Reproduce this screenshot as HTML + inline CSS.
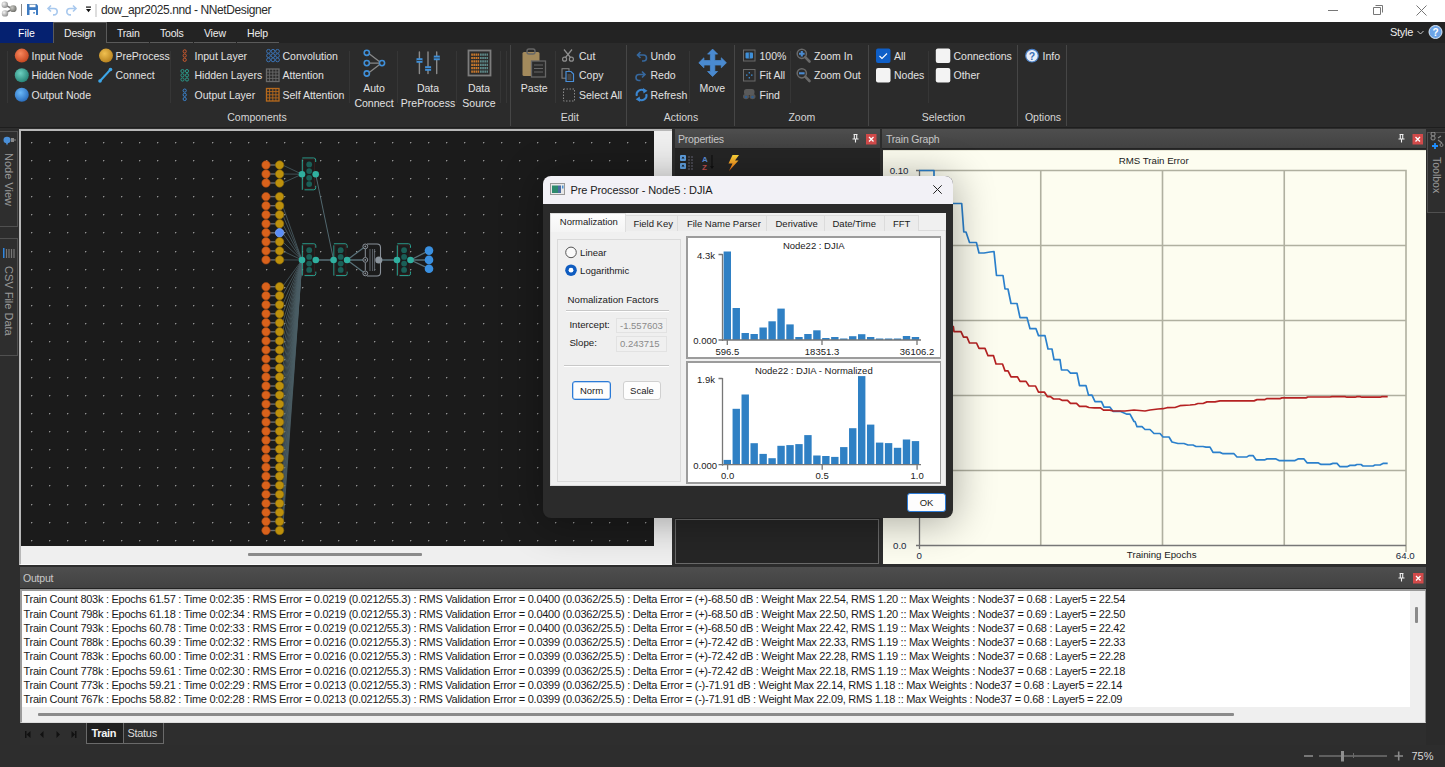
<!DOCTYPE html>
<html><head><meta charset="utf-8">
<style>
*{box-sizing:border-box;margin:0;padding:0}
html,body{width:1445px;height:767px;overflow:hidden;background:#2d2d2d;font-family:"Liberation Sans",sans-serif;}
.a{position:absolute}
.t{position:absolute;white-space:nowrap;line-height:1}
#title{left:0;top:0;width:1445px;height:22px;background:#fff}
#menubar{left:0;top:22px;width:1445px;height:21px;background:#232323}
#ribbon{left:0;top:43px;width:1445px;height:85px;background:#2b2b2b;border-bottom:1px solid #1e1e1e}
.rt{color:#e6e6e6;font-size:11px;letter-spacing:-0.2px}
.sep{position:absolute;width:1px;background:#3c3c3c}
.gsep{position:absolute;width:1px;background:#484848;top:45px;height:81px}
.hdr{position:absolute;height:20px;background:linear-gradient(#4e4e4e,#424242);border-bottom:1px solid #232323}
.hdr .t{color:#d8d8d8;font-size:12px;top:5px;left:5px}
.xbtn{position:absolute;width:11px;height:11px;background:#d24a4a;color:#fff;font-size:9px;line-height:10px;text-align:center;font-weight:bold}
</style></head><body>

<!-- TITLE BAR -->
<div id="title" class="a">
 <svg class="a" style="left:0;top:0" width="100" height="22" viewBox="0 0 100 22">
  <defs><radialGradient id="gb" cx="0.35" cy="0.35" r="0.7"><stop offset="0" stop-color="#f4f4f4"/><stop offset="1" stop-color="#8d8d8d"/></radialGradient>
  <radialGradient id="gb2" cx="0.35" cy="0.35" r="0.7"><stop offset="0" stop-color="#c9c9c4"/><stop offset="1" stop-color="#6e6e69"/></radialGradient></defs>
  <path d="M5 5 L13 9 L5 13" stroke="#777" stroke-width="1.5" fill="none"/>
  <circle cx="4.8" cy="4.8" r="3.2" fill="url(#gb)"/>
  <circle cx="5" cy="13.4" r="3.2" fill="url(#gb)"/>
  <circle cx="13.2" cy="8.7" r="3.4" fill="url(#gb2)"/>
  <rect x="21" y="4" width="1" height="12" fill="#888"/>
  <path d="M27 4h9.5l1.5 1.5v9.5h-11z" fill="#3d7bc2"/><rect x="29.5" y="4.6" width="6" height="2.6" fill="#fff"/><rect x="29.5" y="4" width="6" height="0.8" fill="#9ab"/><rect x="29.5" y="10" width="6.5" height="5" fill="#fff"/><rect x="33.3" y="12" width="1.5" height="1.6" fill="#3d7bc2"/>
  <path d="M51 5.5 L48 8.5 L51 11.5 M48.5 8.5 H54 a3.2 3.2 0 0 1 0 6.4 H53" stroke="#a9c9ee" stroke-width="1.6" fill="none"/>
  <path d="M73 5.5 L76 8.5 L73 11.5 M75.5 8.5 H70 a3.2 3.2 0 0 0 0 6.4 H71" stroke="#a9c9ee" stroke-width="1.6" fill="none"/>
  <rect x="86" y="6.5" width="5" height="1.2" fill="#111"/><path d="M86 9 h5 l-2.5 3.2z" fill="#111"/>
  <rect x="95.5" y="4" width="1" height="13" fill="#bbb"/>
 </svg>
 <span class="t" style="left:101px;top:4px;font-size:12px;color:#2a2a2a;letter-spacing:-0.4px">dow_apr2025.nnd - NNetDesigner</span>
 <svg class="a" style="left:1320px;top:0" width="125" height="22">
  <rect x="1328" y="10" width="10" height="1" fill="#777" transform="translate(-1320,0)"/>
  <path d="M1373.5 7.5 h7 v7 h-7z M1375.5 5.5 h7 v7" stroke="#777" stroke-width="1" fill="none" transform="translate(-1320,0)"/>
  <path d="M1416.5 5.5 l10 10 M1426.5 5.5 l-10 10" stroke="#777" stroke-width="1" fill="none" transform="translate(-1320,0)"/>
 </svg>
</div>
<!-- MENU BAR -->
<div id="menubar" class="a">
 <div class="a" style="left:0;top:0;width:53px;height:21px;background:#052170"></div>
 <span class="t" style="left:18px;top:6px;font-size:10.5px;color:#fff">File</span>
 <div class="a" style="left:53px;top:0;width:54px;height:21px;background:#2b2b2b;border:1px solid #5a5a5a;border-bottom:none"></div>
 <span class="t" style="left:64px;top:6px;font-size:10.5px;color:#eee;letter-spacing:-0.2px">Design</span>
 <div class="a" style="left:107px;top:20px;width:42px;height:1px;background:#5a5a5a"></div>
 <div class="a" style="left:150px;top:20px;width:43px;height:1px;background:#5a5a5a"></div>
 <div class="a" style="left:194px;top:20px;width:42px;height:1px;background:#5a5a5a"></div>
 <div class="a" style="left:237px;top:20px;width:42px;height:1px;background:#5a5a5a"></div>
 <span class="t" style="left:117px;top:6px;font-size:10.5px;color:#eee;letter-spacing:-0.2px">Train</span>
 <span class="t" style="left:160px;top:6px;font-size:10.5px;color:#eee;letter-spacing:-0.2px">Tools</span>
 <span class="t" style="left:204px;top:6px;font-size:10.5px;color:#eee;letter-spacing:-0.2px">View</span>
 <span class="t" style="left:247px;top:6px;font-size:10.5px;color:#eee;letter-spacing:-0.2px">Help</span>
 <span class="t" style="left:1390px;top:5px;font-size:11px;color:#eee;letter-spacing:-0.3px">Style</span>
 <svg class="a" style="left:1415px;top:0" width="30" height="21">
  <path d="M2.5 9 l3 3 l3 -3" stroke="#ccc" stroke-width="1" fill="none"/>
  <circle cx="20.5" cy="10" r="6.5" fill="#6da4e6" stroke="#dbe9f8" stroke-width="1"/>
  <text x="20.5" y="14" font-size="10" font-weight="bold" fill="#fff" text-anchor="middle" font-family="Liberation Sans">?</text>
 </svg>
</div>

<!-- RIBBON -->
<div id="ribbon" class="a"></div>
<div class="a" style="left:510px;top:45px;width:1px;height:81px;background:#464646"></div>
<div class="a" style="left:626px;top:45px;width:1px;height:81px;background:#464646"></div>
<div class="a" style="left:734px;top:45px;width:1px;height:81px;background:#464646"></div>
<div class="a" style="left:868px;top:45px;width:1px;height:81px;background:#464646"></div>
<div class="a" style="left:1017px;top:45px;width:1px;height:81px;background:#464646"></div>
<div class="a" style="left:1066px;top:45px;width:1px;height:81px;background:#464646"></div>
<div class="a" style="left:7px;top:51px;width:1px;height:52px;background:#363636"></div>
<div class="a" style="left:170px;top:51px;width:1px;height:52px;background:#363636"></div>
<div class="a" style="left:349px;top:51px;width:1px;height:52px;background:#363636"></div>
<div class="a" style="left:397px;top:51px;width:1px;height:52px;background:#363636"></div>
<div class="a" style="left:456px;top:51px;width:1px;height:52px;background:#363636"></div>
<div class="a" style="left:500px;top:51px;width:1px;height:52px;background:#363636"></div>
<div class="a" style="left:506px;top:51px;width:1px;height:52px;background:#363636"></div>
<div class="a" style="left:555px;top:51px;width:1px;height:52px;background:#363636"></div>
<div class="a" style="left:689px;top:51px;width:1px;height:52px;background:#363636"></div>
<div class="a" style="left:790px;top:51px;width:1px;height:52px;background:#363636"></div>
<div class="a" style="left:928px;top:51px;width:1px;height:52px;background:#363636"></div>
<span class="t" style="left:31.5px;top:50.9px;font-size:10.5px;color:#e2e2e2;letter-spacing:0px;">Input Node</span>
<span class="t" style="left:31.5px;top:70.1px;font-size:10.5px;color:#e2e2e2;letter-spacing:0px;">Hidden Node</span>
<span class="t" style="left:31.5px;top:89.7px;font-size:10.5px;color:#e2e2e2;letter-spacing:0px;">Output Node</span>
<span class="t" style="left:115.5px;top:50.9px;font-size:10.5px;color:#e2e2e2;letter-spacing:0px;">PreProcess</span>
<span class="t" style="left:115.5px;top:70.1px;font-size:10.5px;color:#e2e2e2;letter-spacing:0px;">Connect</span>
<span class="t" style="left:194.5px;top:50.9px;font-size:10.5px;color:#e2e2e2;letter-spacing:0px;">Input Layer</span>
<span class="t" style="left:194.5px;top:70.1px;font-size:10.5px;color:#e2e2e2;letter-spacing:0px;">Hidden Layers</span>
<span class="t" style="left:194.5px;top:89.7px;font-size:10.5px;color:#e2e2e2;letter-spacing:0px;">Output Layer</span>
<span class="t" style="left:282.5px;top:50.9px;font-size:10.5px;color:#e2e2e2;letter-spacing:0px;">Convolution</span>
<span class="t" style="left:282.5px;top:70.1px;font-size:10.5px;color:#e2e2e2;letter-spacing:0px;">Attention</span>
<span class="t" style="left:282.5px;top:89.7px;font-size:10.5px;color:#e2e2e2;letter-spacing:0px;">Self Attention</span>
<span class="t" style="left:224.0px;width:300px;text-align:center;top:83.4px;font-size:10.5px;color:#e2e2e2;letter-spacing:0px;">Auto</span>
<span class="t" style="left:224.0px;width:300px;text-align:center;top:97.5px;font-size:10.5px;color:#e2e2e2;letter-spacing:0px;">Connect</span>
<span class="t" style="left:278.0px;width:300px;text-align:center;top:83.4px;font-size:10.5px;color:#e2e2e2;letter-spacing:0px;">Data</span>
<span class="t" style="left:278.0px;width:300px;text-align:center;top:97.5px;font-size:10.5px;color:#e2e2e2;letter-spacing:0px;">PreProcess</span>
<span class="t" style="left:329.0px;width:300px;text-align:center;top:83.4px;font-size:10.5px;color:#e2e2e2;letter-spacing:0px;">Data</span>
<span class="t" style="left:329.0px;width:300px;text-align:center;top:97.5px;font-size:10.5px;color:#e2e2e2;letter-spacing:0px;">Source</span>
<span class="t" style="left:384.3px;width:300px;text-align:center;top:83.4px;font-size:10.5px;color:#e2e2e2;letter-spacing:0px;">Paste</span>
<span class="t" style="left:579.0px;top:50.9px;font-size:10.5px;color:#e2e2e2;letter-spacing:0px;">Cut</span>
<span class="t" style="left:579.0px;top:70.1px;font-size:10.5px;color:#e2e2e2;letter-spacing:0px;">Copy</span>
<span class="t" style="left:579.0px;top:89.7px;font-size:10.5px;color:#e2e2e2;letter-spacing:0px;">Select All</span>
<span class="t" style="left:650.5px;top:50.9px;font-size:10.5px;color:#e2e2e2;letter-spacing:0px;">Undo</span>
<span class="t" style="left:650.5px;top:70.1px;font-size:10.5px;color:#e2e2e2;letter-spacing:0px;">Redo</span>
<span class="t" style="left:650.5px;top:89.7px;font-size:10.5px;color:#e2e2e2;letter-spacing:0px;">Refresh</span>
<span class="t" style="left:562.3px;width:300px;text-align:center;top:83.4px;font-size:10.5px;color:#e2e2e2;letter-spacing:0px;">Move</span>
<span class="t" style="left:759.5px;top:50.9px;font-size:10.5px;color:#e2e2e2;letter-spacing:0px;">100%</span>
<span class="t" style="left:759.5px;top:70.1px;font-size:10.5px;color:#e2e2e2;letter-spacing:0px;">Fit All</span>
<span class="t" style="left:759.5px;top:89.7px;font-size:10.5px;color:#e2e2e2;letter-spacing:0px;">Find</span>
<span class="t" style="left:814.0px;top:50.9px;font-size:10.5px;color:#e2e2e2;letter-spacing:0px;">Zoom In</span>
<span class="t" style="left:814.0px;top:70.1px;font-size:10.5px;color:#e2e2e2;letter-spacing:0px;">Zoom Out</span>
<span class="t" style="left:894.0px;top:50.9px;font-size:10.5px;color:#e2e2e2;letter-spacing:0px;">All</span>
<span class="t" style="left:894.0px;top:70.1px;font-size:10.5px;color:#e2e2e2;letter-spacing:0px;">Nodes</span>
<span class="t" style="left:953.5px;top:50.9px;font-size:10.5px;color:#e2e2e2;letter-spacing:0px;">Connections</span>
<span class="t" style="left:953.5px;top:70.1px;font-size:10.5px;color:#e2e2e2;letter-spacing:0px;">Other</span>
<span class="t" style="left:1042.5px;top:50.9px;font-size:10.5px;color:#e2e2e2;letter-spacing:0px;">Info</span>
<span class="t" style="left:107.0px;width:300px;text-align:center;top:111.7px;font-size:10.5px;color:#d6d6d6;letter-spacing:0px;">Components</span>
<span class="t" style="left:419.8px;width:300px;text-align:center;top:111.7px;font-size:10.5px;color:#d6d6d6;letter-spacing:0px;">Edit</span>
<span class="t" style="left:531.0px;width:300px;text-align:center;top:111.7px;font-size:10.5px;color:#d6d6d6;letter-spacing:0px;">Actions</span>
<span class="t" style="left:651.8px;width:300px;text-align:center;top:111.7px;font-size:10.5px;color:#d6d6d6;letter-spacing:0px;">Zoom</span>
<span class="t" style="left:793.4px;width:300px;text-align:center;top:111.7px;font-size:10.5px;color:#d6d6d6;letter-spacing:0px;">Selection</span>
<span class="t" style="left:893.0px;width:300px;text-align:center;top:111.7px;font-size:10.5px;color:#d6d6d6;letter-spacing:0px;">Options</span>
<svg class="a" style="left:0;top:0" width="1100" height="128" viewBox="0 0 1100 128">
<defs><radialGradient id="gOr" cx="0.4" cy="0.35" r="0.75"><stop offset="0" stop-color="#f8875c"/><stop offset="1" stop-color="#c03e18"/></radialGradient><radialGradient id="gTe" cx="0.4" cy="0.35" r="0.75"><stop offset="0" stop-color="#6dd0c0"/><stop offset="1" stop-color="#1d7a6d"/></radialGradient><radialGradient id="gBl" cx="0.4" cy="0.35" r="0.75"><stop offset="0" stop-color="#6ab8f8"/><stop offset="1" stop-color="#2163b5"/></radialGradient><radialGradient id="gGo" cx="0.4" cy="0.35" r="0.75"><stop offset="0" stop-color="#f0c050"/><stop offset="1" stop-color="#b07a18"/></radialGradient></defs>
<circle cx="21.8" cy="55.6" r="7" fill="url(#gOr)"/><circle cx="21.8" cy="75.3" r="7" fill="url(#gTe)"/><circle cx="21.8" cy="94.8" r="7" fill="url(#gBl)"/><circle cx="106" cy="55.6" r="7" fill="url(#gGo)"/><path d="M100 81 L110.5 69.5" stroke="#3da6e8" stroke-width="2"/><circle cx="100" cy="81" r="1.8" fill="#3da6e8"/><circle cx="110.5" cy="69.5" r="1.8" fill="#3da6e8"/><circle cx="184.7" cy="51.4" r="1.6" fill="none" stroke="#cc5a2e" stroke-width="1"/><circle cx="184.7" cy="55.6" r="1.6" fill="none" stroke="#cc5a2e" stroke-width="1"/><circle cx="184.7" cy="59.8" r="1.6" fill="none" stroke="#cc5a2e" stroke-width="1"/><circle cx="182.5" cy="71.1" r="1.6" fill="none" stroke="#2a9a8a" stroke-width="1"/><circle cx="182.5" cy="75.3" r="1.6" fill="none" stroke="#2a9a8a" stroke-width="1"/><circle cx="182.5" cy="79.5" r="1.6" fill="none" stroke="#2a9a8a" stroke-width="1"/><circle cx="187" cy="71.1" r="1.6" fill="none" stroke="#2a9a8a" stroke-width="1"/><circle cx="187" cy="75.3" r="1.6" fill="none" stroke="#2a9a8a" stroke-width="1"/><circle cx="187" cy="79.5" r="1.6" fill="none" stroke="#2a9a8a" stroke-width="1"/><circle cx="184.7" cy="90.6" r="1.6" fill="none" stroke="#3a82cc" stroke-width="1"/><circle cx="184.7" cy="94.8" r="1.6" fill="none" stroke="#3a82cc" stroke-width="1"/><circle cx="184.7" cy="99.0" r="1.6" fill="none" stroke="#3a82cc" stroke-width="1"/><circle cx="268.5" cy="51.3" r="1.9" fill="none" stroke="#3a72b4" stroke-width="1"/><circle cx="268.5" cy="55.6" r="1.9" fill="none" stroke="#3a72b4" stroke-width="1"/><circle cx="268.5" cy="59.9" r="1.9" fill="none" stroke="#3a72b4" stroke-width="1"/><circle cx="273.0" cy="51.3" r="1.9" fill="none" stroke="#3a72b4" stroke-width="1"/><circle cx="273.0" cy="55.6" r="1.9" fill="none" stroke="#3a72b4" stroke-width="1"/><circle cx="273.0" cy="59.9" r="1.9" fill="none" stroke="#3a72b4" stroke-width="1"/><circle cx="277.5" cy="51.3" r="1.9" fill="none" stroke="#3a72b4" stroke-width="1"/><circle cx="277.5" cy="55.6" r="1.9" fill="none" stroke="#3a72b4" stroke-width="1"/><circle cx="277.5" cy="59.9" r="1.9" fill="none" stroke="#3a72b4" stroke-width="1"/><rect x="266.5" y="69" width="12.5" height="12.5" fill="none" stroke="#6a6a6a" stroke-width="1.3"/><path d="M269.6 69 V81.5 M266.5 72.1 H279.0" stroke="#6a6a6a" stroke-width="0.9"/><path d="M272.8 69 V81.5 M266.5 75.2 H279.0" stroke="#6a6a6a" stroke-width="0.9"/><path d="M275.9 69 V81.5 M266.5 78.4 H279.0" stroke="#6a6a6a" stroke-width="0.9"/><rect x="266.5" y="88.5" width="12.5" height="12.5" fill="none" stroke="#b86a1c" stroke-width="1.3"/><path d="M269.6 88.5 V101.0 M266.5 91.6 H279.0" stroke="#b86a1c" stroke-width="0.9"/><path d="M272.8 88.5 V101.0 M266.5 94.8 H279.0" stroke="#b86a1c" stroke-width="0.9"/><path d="M275.9 88.5 V101.0 M266.5 97.9 H279.0" stroke="#b86a1c" stroke-width="0.9"/><g stroke="#3f8fd8" stroke-width="1.6" fill="none"><circle cx="366.8" cy="52.8" r="2.6"/><circle cx="366.8" cy="63.1" r="2.6"/><circle cx="366.8" cy="73.5" r="2.6"/><circle cx="382" cy="63.1" r="2.6"/></g><path d="M369.5 54 L379.3 61.5 M369.5 63.1 H379.3 M369.5 72.3 L379.3 64.7" stroke="#888" stroke-width="1.3"/><path d="M419.4 52 V73.5 M428 52 V73.5 M436.7 52 V73.5" stroke="#8a8a8a" stroke-width="1.4" stroke-linecap="round"/><rect x="416.5" y="58.2" width="6" height="4.6" fill="#3f8fd8"/><rect x="425.1" y="66.2" width="6" height="4.6" fill="#3f8fd8"/><rect x="433.8" y="55.6" width="6" height="4.6" fill="#3f8fd8"/><path d="M416.5 60.5 H422.5 M425.1 68.5 H431.1 M433.8 57.9 H439.8" stroke="#2b2b2b" stroke-width="0.8"/><rect x="468.5" y="50.5" width="22" height="25" fill="#2b2b2b" stroke="#7d7d7d" stroke-width="1.8"/><path d="M471.2 54.6 h8" stroke="#c8782c" stroke-width="2.2" stroke-dasharray="1.7 0.5"/><path d="M480 54.6 h8" stroke="#5d8888" stroke-width="2.2" stroke-dasharray="1.7 0.5"/><path d="M471.2 58.0 h8" stroke="#c8782c" stroke-width="2.2" stroke-dasharray="1.7 0.5"/><path d="M480 58.0 h8" stroke="#5d8888" stroke-width="2.2" stroke-dasharray="1.7 0.5"/><path d="M471.2 61.4 h8" stroke="#c8782c" stroke-width="2.2" stroke-dasharray="1.7 0.5"/><path d="M480 61.4 h8" stroke="#5d8888" stroke-width="2.2" stroke-dasharray="1.7 0.5"/><path d="M471.2 64.8 h8" stroke="#c8782c" stroke-width="2.2" stroke-dasharray="1.7 0.5"/><path d="M480 64.8 h8" stroke="#5d8888" stroke-width="2.2" stroke-dasharray="1.7 0.5"/><path d="M471.2 68.2 h8" stroke="#c8782c" stroke-width="2.2" stroke-dasharray="1.7 0.5"/><path d="M480 68.2 h8" stroke="#5d8888" stroke-width="2.2" stroke-dasharray="1.7 0.5"/><path d="M471.2 71.6 h8" stroke="#c8782c" stroke-width="2.2" stroke-dasharray="1.7 0.5"/><path d="M480 71.6 h8" stroke="#5d8888" stroke-width="2.2" stroke-dasharray="1.7 0.5"/><rect x="522.5" y="52" width="17" height="24" rx="1.5" fill="#a38a5c"/><rect x="527" y="49" width="8" height="5" rx="2" fill="none" stroke="#666" stroke-width="1.4"/><rect x="531.5" y="61" width="14" height="16" fill="#2b2b2b" stroke="#666" stroke-width="1.3"/><path d="M534 65 H543 M534 68.5 H543 M534 72 H543" stroke="#666" stroke-width="1"/><g stroke="#8f8f8f" stroke-width="1.2" fill="none"><circle cx="564.6" cy="59.2" r="2"/><circle cx="571.4" cy="59.2" r="2"/><path d="M565.5 57.5 L572 49.5 M570.5 57.5 L564 49.5"/></g><rect x="562" y="68.7" width="7" height="9.5" fill="none" stroke="#888" stroke-width="1"/><path d="M566 71.5 h5 l2.5 2.5 v7.5 h-7.5z" fill="#2b2b2b" stroke="#4a8fd8" stroke-width="1.2"/><path d="M567.5 75 h4 M567.5 77 h4 M567.5 79 h4" stroke="#777" stroke-width="0.7"/><rect x="563.5" y="89" width="11" height="12" fill="none" stroke="#8a8a8a" stroke-width="1" stroke-dasharray="1.5 1.5"/><path d="M640.5 52 L637.5 55 L640.5 58 M638 55 H643.5 a3 3 0 0 1 0 6 H642" stroke="#36689e" stroke-width="1.6" fill="none"/><path d="M642 71.5 L645 74.5 L642 77.5 M644.5 74.5 H639 a3 3 0 0 0 0 6 H640.5" stroke="#36689e" stroke-width="1.6" fill="none"/><path d="M636.8 96 A4.8 4.8 0 0 1 644.5 91" stroke="#3b86d0" stroke-width="2" fill="none"/><path d="M646.3 94 A4.8 4.8 0 0 1 638.6 99" stroke="#3b86d0" stroke-width="2" fill="none"/><path d="M643 88 L647.5 90.8 L643.5 93.5z M640.2 102 L635.7 99.2 L639.7 96.5z" fill="#3b86d0"/><path d="M712.6 49.1 L717.6 54.1 L714.8 54.1 L714.8 60.6 L721.3 60.6 L721.3 57.8 L726.4 62.8 L721.3 67.8 L721.3 65.0 L714.8 65.0 L714.8 71.5 L717.6 71.5 L712.6 76.5 L707.6 71.5 L710.4 71.5 L710.4 65.0 L703.9 65.0 L703.9 67.8 L698.8 62.8 L703.9 57.8 L703.9 60.6 L710.4 60.6 L710.4 54.1 L707.6 54.1z" fill="#4a8ad0" stroke="#4a8ad0" stroke-width="0.8" stroke-linejoin="round"/><rect x="743.5" y="50" width="11.5" height="11" fill="none" stroke="#6a6a6a" stroke-width="1"/><rect x="745.5" y="52.5" width="7.5" height="6" rx="1" fill="#3f8fd8"/><path d="M749.3 52.5 v6" stroke="#2b2b2b" stroke-width="0.8"/><rect x="743.5" y="69.5" width="11.5" height="11.5" fill="none" stroke="#6a6a6a" stroke-width="1"/><path d="M749.3 72 v1.5 M749.3 77 v1.5 M746 75.2 h1.5 M751 75.2 h1.5" stroke="#3f8fd8" stroke-width="1.2"/><ellipse cx="746" cy="96.5" rx="3" ry="2.8" fill="#555"/><ellipse cx="752.5" cy="96.5" rx="3" ry="2.8" fill="#555"/><rect x="744" y="89" width="10.5" height="6" rx="2.5" fill="#5a5a5a"/><circle cx="746" cy="97" r="1.3" fill="#2f5d8e"/><circle cx="752.5" cy="97" r="1.3" fill="#2f5d8e"/><circle cx="801.8" cy="53.8" r="4.6" fill="none" stroke="#6a6a6a" stroke-width="1.5"/><path d="M805.2 57.2 L809.5 61.5" stroke="#6a6a6a" stroke-width="2.6" stroke-linecap="round"/><path d="M799 53.8 h5.6 M801.8 51 v5.6" stroke="#4a8ad0" stroke-width="2.1"/><circle cx="801.8" cy="73.3" r="4.6" fill="none" stroke="#6a6a6a" stroke-width="1.5"/><path d="M805.2 76.7 L809.5 81" stroke="#6a6a6a" stroke-width="2.6" stroke-linecap="round"/><path d="M799 73.3 h5.6" stroke="#4a8ad0" stroke-width="2.1"/><rect x="876" y="48.5" width="14.5" height="14.5" rx="2" fill="#0f5fc8"/><path d="M879.5 56 l2.5 2.5 l5 -5" stroke="#fff" stroke-width="1.1" fill="none"/><rect x="876" y="68" width="14.5" height="14.5" rx="2" fill="#f3f3f3"/><rect x="935.8" y="48.5" width="14.5" height="14.5" rx="2" fill="#f3f3f3"/><rect x="935.8" y="68" width="14.5" height="14.5" rx="2" fill="#f3f3f3"/><circle cx="1032" cy="55.7" r="6.3" fill="#e9eff8" stroke="#4a80c8" stroke-width="1.2"/><text x="1032" y="59.8" font-size="10.5" font-weight="bold" fill="#3a70b8" text-anchor="middle" font-family="Liberation Sans">?</text></svg>
<!-- LEFT SIDEBAR -->
<div class="a" style="left:0px;top:131px;width:18px;height:96px;background:#2e2e2e;border:1px solid #505050;border-left:none"></div>
<div class="a" style="left:0px;top:238px;width:18px;height:118px;background:#2e2e2e;border:1px solid #505050;border-left:none"></div>
<svg class="a" style="left:0;top:131px" width="18" height="230"><path d="M3.5 9 a3.5 3.2 0 1 1 7 0 a3.5 3.2 0 1 1 -7 0" fill="#4a90d9"/><path d="M6 12 h2 l-1 2.5z" fill="#4a90d9"/><rect x="11" y="7" width="3" height="4" fill="#888"/><path d="M14 9 h2" stroke="#888"/><rect x="3" y="117" width="1.5" height="10" fill="#2f86e0"/><path d="M6.5 118 v9 M9 118 v9 M11.5 118 v9 M14 118 v9" stroke="#777" stroke-width="1.2"/></svg>
<span class="t" style="left:1px;top:153px;font-size:11px;color:#9a9a9a;transform-origin:0 0;transform:translate(12.5px,0) rotate(90deg)">Node View</span>
<span class="t" style="left:1px;top:265.5px;font-size:11px;color:#9a9a9a;transform-origin:0 0;transform:translate(12.5px,0) rotate(90deg)">CSV File Data</span>
<div class="a" style="left:19px;top:129px;width:653px;height:436px;background:#efefef;border-top:2px solid #b8b8b8;border-left:2px solid #b8b8b8;border-bottom:1px solid #fafafa"></div>
<svg class="a" style="left:21px;top:131px" width="633" height="415" viewBox="21 131 633 415">
<rect x="21" y="131" width="633" height="415" fill="#1b1b1b"/>
<path d="M31 142h1v1h-1zM49 142h1v1h-1zM67 142h1v1h-1zM85 142h1v1h-1zM103 142h1v1h-1zM121 142h1v1h-1zM139 142h1v1h-1zM157 142h1v1h-1zM175 142h1v1h-1zM193 142h1v1h-1zM212 142h1v1h-1zM230 142h1v1h-1zM248 142h1v1h-1zM266 142h1v1h-1zM284 142h1v1h-1zM302 142h1v1h-1zM320 142h1v1h-1zM338 142h1v1h-1zM356 142h1v1h-1zM374 142h1v1h-1zM392 142h1v1h-1zM410 142h1v1h-1zM428 142h1v1h-1zM446 142h1v1h-1zM464 142h1v1h-1zM483 142h1v1h-1zM501 142h1v1h-1zM519 142h1v1h-1zM537 142h1v1h-1zM555 142h1v1h-1zM573 142h1v1h-1zM591 142h1v1h-1zM609 142h1v1h-1zM627 142h1v1h-1zM645 142h1v1h-1zM31 160h1v1h-1zM49 160h1v1h-1zM67 160h1v1h-1zM85 160h1v1h-1zM103 160h1v1h-1zM121 160h1v1h-1zM139 160h1v1h-1zM157 160h1v1h-1zM175 160h1v1h-1zM193 160h1v1h-1zM212 160h1v1h-1zM230 160h1v1h-1zM248 160h1v1h-1zM266 160h1v1h-1zM284 160h1v1h-1zM302 160h1v1h-1zM320 160h1v1h-1zM338 160h1v1h-1zM356 160h1v1h-1zM374 160h1v1h-1zM392 160h1v1h-1zM410 160h1v1h-1zM428 160h1v1h-1zM446 160h1v1h-1zM464 160h1v1h-1zM483 160h1v1h-1zM501 160h1v1h-1zM519 160h1v1h-1zM537 160h1v1h-1zM555 160h1v1h-1zM573 160h1v1h-1zM591 160h1v1h-1zM609 160h1v1h-1zM627 160h1v1h-1zM645 160h1v1h-1zM31 178h1v1h-1zM49 178h1v1h-1zM67 178h1v1h-1zM85 178h1v1h-1zM103 178h1v1h-1zM121 178h1v1h-1zM139 178h1v1h-1zM157 178h1v1h-1zM175 178h1v1h-1zM193 178h1v1h-1zM212 178h1v1h-1zM230 178h1v1h-1zM248 178h1v1h-1zM266 178h1v1h-1zM284 178h1v1h-1zM302 178h1v1h-1zM320 178h1v1h-1zM338 178h1v1h-1zM356 178h1v1h-1zM374 178h1v1h-1zM392 178h1v1h-1zM410 178h1v1h-1zM428 178h1v1h-1zM446 178h1v1h-1zM464 178h1v1h-1zM483 178h1v1h-1zM501 178h1v1h-1zM519 178h1v1h-1zM537 178h1v1h-1zM555 178h1v1h-1zM573 178h1v1h-1zM591 178h1v1h-1zM609 178h1v1h-1zM627 178h1v1h-1zM645 178h1v1h-1zM31 196h1v1h-1zM49 196h1v1h-1zM67 196h1v1h-1zM85 196h1v1h-1zM103 196h1v1h-1zM121 196h1v1h-1zM139 196h1v1h-1zM157 196h1v1h-1zM175 196h1v1h-1zM193 196h1v1h-1zM212 196h1v1h-1zM230 196h1v1h-1zM248 196h1v1h-1zM266 196h1v1h-1zM284 196h1v1h-1zM302 196h1v1h-1zM320 196h1v1h-1zM338 196h1v1h-1zM356 196h1v1h-1zM374 196h1v1h-1zM392 196h1v1h-1zM410 196h1v1h-1zM428 196h1v1h-1zM446 196h1v1h-1zM464 196h1v1h-1zM483 196h1v1h-1zM501 196h1v1h-1zM519 196h1v1h-1zM537 196h1v1h-1zM555 196h1v1h-1zM573 196h1v1h-1zM591 196h1v1h-1zM609 196h1v1h-1zM627 196h1v1h-1zM645 196h1v1h-1zM31 214h1v1h-1zM49 214h1v1h-1zM67 214h1v1h-1zM85 214h1v1h-1zM103 214h1v1h-1zM121 214h1v1h-1zM139 214h1v1h-1zM157 214h1v1h-1zM175 214h1v1h-1zM193 214h1v1h-1zM212 214h1v1h-1zM230 214h1v1h-1zM248 214h1v1h-1zM266 214h1v1h-1zM284 214h1v1h-1zM302 214h1v1h-1zM320 214h1v1h-1zM338 214h1v1h-1zM356 214h1v1h-1zM374 214h1v1h-1zM392 214h1v1h-1zM410 214h1v1h-1zM428 214h1v1h-1zM446 214h1v1h-1zM464 214h1v1h-1zM483 214h1v1h-1zM501 214h1v1h-1zM519 214h1v1h-1zM537 214h1v1h-1zM555 214h1v1h-1zM573 214h1v1h-1zM591 214h1v1h-1zM609 214h1v1h-1zM627 214h1v1h-1zM645 214h1v1h-1zM31 232h1v1h-1zM49 232h1v1h-1zM67 232h1v1h-1zM85 232h1v1h-1zM103 232h1v1h-1zM121 232h1v1h-1zM139 232h1v1h-1zM157 232h1v1h-1zM175 232h1v1h-1zM193 232h1v1h-1zM212 232h1v1h-1zM230 232h1v1h-1zM248 232h1v1h-1zM266 232h1v1h-1zM284 232h1v1h-1zM302 232h1v1h-1zM320 232h1v1h-1zM338 232h1v1h-1zM356 232h1v1h-1zM374 232h1v1h-1zM392 232h1v1h-1zM410 232h1v1h-1zM428 232h1v1h-1zM446 232h1v1h-1zM464 232h1v1h-1zM483 232h1v1h-1zM501 232h1v1h-1zM519 232h1v1h-1zM537 232h1v1h-1zM555 232h1v1h-1zM573 232h1v1h-1zM591 232h1v1h-1zM609 232h1v1h-1zM627 232h1v1h-1zM645 232h1v1h-1zM31 251h1v1h-1zM49 251h1v1h-1zM67 251h1v1h-1zM85 251h1v1h-1zM103 251h1v1h-1zM121 251h1v1h-1zM139 251h1v1h-1zM157 251h1v1h-1zM175 251h1v1h-1zM193 251h1v1h-1zM212 251h1v1h-1zM230 251h1v1h-1zM248 251h1v1h-1zM266 251h1v1h-1zM284 251h1v1h-1zM302 251h1v1h-1zM320 251h1v1h-1zM338 251h1v1h-1zM356 251h1v1h-1zM374 251h1v1h-1zM392 251h1v1h-1zM410 251h1v1h-1zM428 251h1v1h-1zM446 251h1v1h-1zM464 251h1v1h-1zM483 251h1v1h-1zM501 251h1v1h-1zM519 251h1v1h-1zM537 251h1v1h-1zM555 251h1v1h-1zM573 251h1v1h-1zM591 251h1v1h-1zM609 251h1v1h-1zM627 251h1v1h-1zM645 251h1v1h-1zM31 269h1v1h-1zM49 269h1v1h-1zM67 269h1v1h-1zM85 269h1v1h-1zM103 269h1v1h-1zM121 269h1v1h-1zM139 269h1v1h-1zM157 269h1v1h-1zM175 269h1v1h-1zM193 269h1v1h-1zM212 269h1v1h-1zM230 269h1v1h-1zM248 269h1v1h-1zM266 269h1v1h-1zM284 269h1v1h-1zM302 269h1v1h-1zM320 269h1v1h-1zM338 269h1v1h-1zM356 269h1v1h-1zM374 269h1v1h-1zM392 269h1v1h-1zM410 269h1v1h-1zM428 269h1v1h-1zM446 269h1v1h-1zM464 269h1v1h-1zM483 269h1v1h-1zM501 269h1v1h-1zM519 269h1v1h-1zM537 269h1v1h-1zM555 269h1v1h-1zM573 269h1v1h-1zM591 269h1v1h-1zM609 269h1v1h-1zM627 269h1v1h-1zM645 269h1v1h-1zM31 287h1v1h-1zM49 287h1v1h-1zM67 287h1v1h-1zM85 287h1v1h-1zM103 287h1v1h-1zM121 287h1v1h-1zM139 287h1v1h-1zM157 287h1v1h-1zM175 287h1v1h-1zM193 287h1v1h-1zM212 287h1v1h-1zM230 287h1v1h-1zM248 287h1v1h-1zM266 287h1v1h-1zM284 287h1v1h-1zM302 287h1v1h-1zM320 287h1v1h-1zM338 287h1v1h-1zM356 287h1v1h-1zM374 287h1v1h-1zM392 287h1v1h-1zM410 287h1v1h-1zM428 287h1v1h-1zM446 287h1v1h-1zM464 287h1v1h-1zM483 287h1v1h-1zM501 287h1v1h-1zM519 287h1v1h-1zM537 287h1v1h-1zM555 287h1v1h-1zM573 287h1v1h-1zM591 287h1v1h-1zM609 287h1v1h-1zM627 287h1v1h-1zM645 287h1v1h-1zM31 305h1v1h-1zM49 305h1v1h-1zM67 305h1v1h-1zM85 305h1v1h-1zM103 305h1v1h-1zM121 305h1v1h-1zM139 305h1v1h-1zM157 305h1v1h-1zM175 305h1v1h-1zM193 305h1v1h-1zM212 305h1v1h-1zM230 305h1v1h-1zM248 305h1v1h-1zM266 305h1v1h-1zM284 305h1v1h-1zM302 305h1v1h-1zM320 305h1v1h-1zM338 305h1v1h-1zM356 305h1v1h-1zM374 305h1v1h-1zM392 305h1v1h-1zM410 305h1v1h-1zM428 305h1v1h-1zM446 305h1v1h-1zM464 305h1v1h-1zM483 305h1v1h-1zM501 305h1v1h-1zM519 305h1v1h-1zM537 305h1v1h-1zM555 305h1v1h-1zM573 305h1v1h-1zM591 305h1v1h-1zM609 305h1v1h-1zM627 305h1v1h-1zM645 305h1v1h-1zM31 323h1v1h-1zM49 323h1v1h-1zM67 323h1v1h-1zM85 323h1v1h-1zM103 323h1v1h-1zM121 323h1v1h-1zM139 323h1v1h-1zM157 323h1v1h-1zM175 323h1v1h-1zM193 323h1v1h-1zM212 323h1v1h-1zM230 323h1v1h-1zM248 323h1v1h-1zM266 323h1v1h-1zM284 323h1v1h-1zM302 323h1v1h-1zM320 323h1v1h-1zM338 323h1v1h-1zM356 323h1v1h-1zM374 323h1v1h-1zM392 323h1v1h-1zM410 323h1v1h-1zM428 323h1v1h-1zM446 323h1v1h-1zM464 323h1v1h-1zM483 323h1v1h-1zM501 323h1v1h-1zM519 323h1v1h-1zM537 323h1v1h-1zM555 323h1v1h-1zM573 323h1v1h-1zM591 323h1v1h-1zM609 323h1v1h-1zM627 323h1v1h-1zM645 323h1v1h-1zM31 341h1v1h-1zM49 341h1v1h-1zM67 341h1v1h-1zM85 341h1v1h-1zM103 341h1v1h-1zM121 341h1v1h-1zM139 341h1v1h-1zM157 341h1v1h-1zM175 341h1v1h-1zM193 341h1v1h-1zM212 341h1v1h-1zM230 341h1v1h-1zM248 341h1v1h-1zM266 341h1v1h-1zM284 341h1v1h-1zM302 341h1v1h-1zM320 341h1v1h-1zM338 341h1v1h-1zM356 341h1v1h-1zM374 341h1v1h-1zM392 341h1v1h-1zM410 341h1v1h-1zM428 341h1v1h-1zM446 341h1v1h-1zM464 341h1v1h-1zM483 341h1v1h-1zM501 341h1v1h-1zM519 341h1v1h-1zM537 341h1v1h-1zM555 341h1v1h-1zM573 341h1v1h-1zM591 341h1v1h-1zM609 341h1v1h-1zM627 341h1v1h-1zM645 341h1v1h-1zM31 359h1v1h-1zM49 359h1v1h-1zM67 359h1v1h-1zM85 359h1v1h-1zM103 359h1v1h-1zM121 359h1v1h-1zM139 359h1v1h-1zM157 359h1v1h-1zM175 359h1v1h-1zM193 359h1v1h-1zM212 359h1v1h-1zM230 359h1v1h-1zM248 359h1v1h-1zM266 359h1v1h-1zM284 359h1v1h-1zM302 359h1v1h-1zM320 359h1v1h-1zM338 359h1v1h-1zM356 359h1v1h-1zM374 359h1v1h-1zM392 359h1v1h-1zM410 359h1v1h-1zM428 359h1v1h-1zM446 359h1v1h-1zM464 359h1v1h-1zM483 359h1v1h-1zM501 359h1v1h-1zM519 359h1v1h-1zM537 359h1v1h-1zM555 359h1v1h-1zM573 359h1v1h-1zM591 359h1v1h-1zM609 359h1v1h-1zM627 359h1v1h-1zM645 359h1v1h-1zM31 377h1v1h-1zM49 377h1v1h-1zM67 377h1v1h-1zM85 377h1v1h-1zM103 377h1v1h-1zM121 377h1v1h-1zM139 377h1v1h-1zM157 377h1v1h-1zM175 377h1v1h-1zM193 377h1v1h-1zM212 377h1v1h-1zM230 377h1v1h-1zM248 377h1v1h-1zM266 377h1v1h-1zM284 377h1v1h-1zM302 377h1v1h-1zM320 377h1v1h-1zM338 377h1v1h-1zM356 377h1v1h-1zM374 377h1v1h-1zM392 377h1v1h-1zM410 377h1v1h-1zM428 377h1v1h-1zM446 377h1v1h-1zM464 377h1v1h-1zM483 377h1v1h-1zM501 377h1v1h-1zM519 377h1v1h-1zM537 377h1v1h-1zM555 377h1v1h-1zM573 377h1v1h-1zM591 377h1v1h-1zM609 377h1v1h-1zM627 377h1v1h-1zM645 377h1v1h-1zM31 395h1v1h-1zM49 395h1v1h-1zM67 395h1v1h-1zM85 395h1v1h-1zM103 395h1v1h-1zM121 395h1v1h-1zM139 395h1v1h-1zM157 395h1v1h-1zM175 395h1v1h-1zM193 395h1v1h-1zM212 395h1v1h-1zM230 395h1v1h-1zM248 395h1v1h-1zM266 395h1v1h-1zM284 395h1v1h-1zM302 395h1v1h-1zM320 395h1v1h-1zM338 395h1v1h-1zM356 395h1v1h-1zM374 395h1v1h-1zM392 395h1v1h-1zM410 395h1v1h-1zM428 395h1v1h-1zM446 395h1v1h-1zM464 395h1v1h-1zM483 395h1v1h-1zM501 395h1v1h-1zM519 395h1v1h-1zM537 395h1v1h-1zM555 395h1v1h-1zM573 395h1v1h-1zM591 395h1v1h-1zM609 395h1v1h-1zM627 395h1v1h-1zM645 395h1v1h-1zM31 413h1v1h-1zM49 413h1v1h-1zM67 413h1v1h-1zM85 413h1v1h-1zM103 413h1v1h-1zM121 413h1v1h-1zM139 413h1v1h-1zM157 413h1v1h-1zM175 413h1v1h-1zM193 413h1v1h-1zM212 413h1v1h-1zM230 413h1v1h-1zM248 413h1v1h-1zM266 413h1v1h-1zM284 413h1v1h-1zM302 413h1v1h-1zM320 413h1v1h-1zM338 413h1v1h-1zM356 413h1v1h-1zM374 413h1v1h-1zM392 413h1v1h-1zM410 413h1v1h-1zM428 413h1v1h-1zM446 413h1v1h-1zM464 413h1v1h-1zM483 413h1v1h-1zM501 413h1v1h-1zM519 413h1v1h-1zM537 413h1v1h-1zM555 413h1v1h-1zM573 413h1v1h-1zM591 413h1v1h-1zM609 413h1v1h-1zM627 413h1v1h-1zM645 413h1v1h-1zM31 431h1v1h-1zM49 431h1v1h-1zM67 431h1v1h-1zM85 431h1v1h-1zM103 431h1v1h-1zM121 431h1v1h-1zM139 431h1v1h-1zM157 431h1v1h-1zM175 431h1v1h-1zM193 431h1v1h-1zM212 431h1v1h-1zM230 431h1v1h-1zM248 431h1v1h-1zM266 431h1v1h-1zM284 431h1v1h-1zM302 431h1v1h-1zM320 431h1v1h-1zM338 431h1v1h-1zM356 431h1v1h-1zM374 431h1v1h-1zM392 431h1v1h-1zM410 431h1v1h-1zM428 431h1v1h-1zM446 431h1v1h-1zM464 431h1v1h-1zM483 431h1v1h-1zM501 431h1v1h-1zM519 431h1v1h-1zM537 431h1v1h-1zM555 431h1v1h-1zM573 431h1v1h-1zM591 431h1v1h-1zM609 431h1v1h-1zM627 431h1v1h-1zM645 431h1v1h-1zM31 449h1v1h-1zM49 449h1v1h-1zM67 449h1v1h-1zM85 449h1v1h-1zM103 449h1v1h-1zM121 449h1v1h-1zM139 449h1v1h-1zM157 449h1v1h-1zM175 449h1v1h-1zM193 449h1v1h-1zM212 449h1v1h-1zM230 449h1v1h-1zM248 449h1v1h-1zM266 449h1v1h-1zM284 449h1v1h-1zM302 449h1v1h-1zM320 449h1v1h-1zM338 449h1v1h-1zM356 449h1v1h-1zM374 449h1v1h-1zM392 449h1v1h-1zM410 449h1v1h-1zM428 449h1v1h-1zM446 449h1v1h-1zM464 449h1v1h-1zM483 449h1v1h-1zM501 449h1v1h-1zM519 449h1v1h-1zM537 449h1v1h-1zM555 449h1v1h-1zM573 449h1v1h-1zM591 449h1v1h-1zM609 449h1v1h-1zM627 449h1v1h-1zM645 449h1v1h-1zM31 467h1v1h-1zM49 467h1v1h-1zM67 467h1v1h-1zM85 467h1v1h-1zM103 467h1v1h-1zM121 467h1v1h-1zM139 467h1v1h-1zM157 467h1v1h-1zM175 467h1v1h-1zM193 467h1v1h-1zM212 467h1v1h-1zM230 467h1v1h-1zM248 467h1v1h-1zM266 467h1v1h-1zM284 467h1v1h-1zM302 467h1v1h-1zM320 467h1v1h-1zM338 467h1v1h-1zM356 467h1v1h-1zM374 467h1v1h-1zM392 467h1v1h-1zM410 467h1v1h-1zM428 467h1v1h-1zM446 467h1v1h-1zM464 467h1v1h-1zM483 467h1v1h-1zM501 467h1v1h-1zM519 467h1v1h-1zM537 467h1v1h-1zM555 467h1v1h-1zM573 467h1v1h-1zM591 467h1v1h-1zM609 467h1v1h-1zM627 467h1v1h-1zM645 467h1v1h-1zM31 485h1v1h-1zM49 485h1v1h-1zM67 485h1v1h-1zM85 485h1v1h-1zM103 485h1v1h-1zM121 485h1v1h-1zM139 485h1v1h-1zM157 485h1v1h-1zM175 485h1v1h-1zM193 485h1v1h-1zM212 485h1v1h-1zM230 485h1v1h-1zM248 485h1v1h-1zM266 485h1v1h-1zM284 485h1v1h-1zM302 485h1v1h-1zM320 485h1v1h-1zM338 485h1v1h-1zM356 485h1v1h-1zM374 485h1v1h-1zM392 485h1v1h-1zM410 485h1v1h-1zM428 485h1v1h-1zM446 485h1v1h-1zM464 485h1v1h-1zM483 485h1v1h-1zM501 485h1v1h-1zM519 485h1v1h-1zM537 485h1v1h-1zM555 485h1v1h-1zM573 485h1v1h-1zM591 485h1v1h-1zM609 485h1v1h-1zM627 485h1v1h-1zM645 485h1v1h-1zM31 504h1v1h-1zM49 504h1v1h-1zM67 504h1v1h-1zM85 504h1v1h-1zM103 504h1v1h-1zM121 504h1v1h-1zM139 504h1v1h-1zM157 504h1v1h-1zM175 504h1v1h-1zM193 504h1v1h-1zM212 504h1v1h-1zM230 504h1v1h-1zM248 504h1v1h-1zM266 504h1v1h-1zM284 504h1v1h-1zM302 504h1v1h-1zM320 504h1v1h-1zM338 504h1v1h-1zM356 504h1v1h-1zM374 504h1v1h-1zM392 504h1v1h-1zM410 504h1v1h-1zM428 504h1v1h-1zM446 504h1v1h-1zM464 504h1v1h-1zM483 504h1v1h-1zM501 504h1v1h-1zM519 504h1v1h-1zM537 504h1v1h-1zM555 504h1v1h-1zM573 504h1v1h-1zM591 504h1v1h-1zM609 504h1v1h-1zM627 504h1v1h-1zM645 504h1v1h-1zM31 522h1v1h-1zM49 522h1v1h-1zM67 522h1v1h-1zM85 522h1v1h-1zM103 522h1v1h-1zM121 522h1v1h-1zM139 522h1v1h-1zM157 522h1v1h-1zM175 522h1v1h-1zM193 522h1v1h-1zM212 522h1v1h-1zM230 522h1v1h-1zM248 522h1v1h-1zM266 522h1v1h-1zM284 522h1v1h-1zM302 522h1v1h-1zM320 522h1v1h-1zM338 522h1v1h-1zM356 522h1v1h-1zM374 522h1v1h-1zM392 522h1v1h-1zM410 522h1v1h-1zM428 522h1v1h-1zM446 522h1v1h-1zM464 522h1v1h-1zM483 522h1v1h-1zM501 522h1v1h-1zM519 522h1v1h-1zM537 522h1v1h-1zM555 522h1v1h-1zM573 522h1v1h-1zM591 522h1v1h-1zM609 522h1v1h-1zM627 522h1v1h-1zM645 522h1v1h-1zM31 540h1v1h-1zM49 540h1v1h-1zM67 540h1v1h-1zM85 540h1v1h-1zM103 540h1v1h-1zM121 540h1v1h-1zM139 540h1v1h-1zM157 540h1v1h-1zM175 540h1v1h-1zM193 540h1v1h-1zM212 540h1v1h-1zM230 540h1v1h-1zM248 540h1v1h-1zM266 540h1v1h-1zM284 540h1v1h-1zM302 540h1v1h-1zM320 540h1v1h-1zM338 540h1v1h-1zM356 540h1v1h-1zM374 540h1v1h-1zM392 540h1v1h-1zM410 540h1v1h-1zM428 540h1v1h-1zM446 540h1v1h-1zM464 540h1v1h-1zM483 540h1v1h-1zM501 540h1v1h-1zM519 540h1v1h-1zM537 540h1v1h-1zM555 540h1v1h-1zM573 540h1v1h-1zM591 540h1v1h-1zM609 540h1v1h-1zM627 540h1v1h-1zM645 540h1v1h-1z" fill="#929292"/>
<path d="M32 142h1v1h-1zM31 143h1v1h-1zM50 142h1v1h-1zM49 143h1v1h-1zM68 142h1v1h-1zM67 143h1v1h-1zM86 142h1v1h-1zM85 143h1v1h-1zM104 142h1v1h-1zM103 143h1v1h-1zM122 142h1v1h-1zM121 143h1v1h-1zM140 142h1v1h-1zM139 143h1v1h-1zM158 142h1v1h-1zM157 143h1v1h-1zM176 142h1v1h-1zM175 143h1v1h-1zM194 142h1v1h-1zM193 143h1v1h-1zM213 142h1v1h-1zM212 143h1v1h-1zM231 142h1v1h-1zM230 143h1v1h-1zM249 142h1v1h-1zM248 143h1v1h-1zM267 142h1v1h-1zM266 143h1v1h-1zM285 142h1v1h-1zM284 143h1v1h-1zM303 142h1v1h-1zM302 143h1v1h-1zM321 142h1v1h-1zM320 143h1v1h-1zM339 142h1v1h-1zM338 143h1v1h-1zM357 142h1v1h-1zM356 143h1v1h-1zM375 142h1v1h-1zM374 143h1v1h-1zM393 142h1v1h-1zM392 143h1v1h-1zM411 142h1v1h-1zM410 143h1v1h-1zM429 142h1v1h-1zM428 143h1v1h-1zM447 142h1v1h-1zM446 143h1v1h-1zM465 142h1v1h-1zM464 143h1v1h-1zM484 142h1v1h-1zM483 143h1v1h-1zM502 142h1v1h-1zM501 143h1v1h-1zM520 142h1v1h-1zM519 143h1v1h-1zM538 142h1v1h-1zM537 143h1v1h-1zM556 142h1v1h-1zM555 143h1v1h-1zM574 142h1v1h-1zM573 143h1v1h-1zM592 142h1v1h-1zM591 143h1v1h-1zM610 142h1v1h-1zM609 143h1v1h-1zM628 142h1v1h-1zM627 143h1v1h-1zM646 142h1v1h-1zM645 143h1v1h-1zM32 160h1v1h-1zM31 161h1v1h-1zM50 160h1v1h-1zM49 161h1v1h-1zM68 160h1v1h-1zM67 161h1v1h-1zM86 160h1v1h-1zM85 161h1v1h-1zM104 160h1v1h-1zM103 161h1v1h-1zM122 160h1v1h-1zM121 161h1v1h-1zM140 160h1v1h-1zM139 161h1v1h-1zM158 160h1v1h-1zM157 161h1v1h-1zM176 160h1v1h-1zM175 161h1v1h-1zM194 160h1v1h-1zM193 161h1v1h-1zM213 160h1v1h-1zM212 161h1v1h-1zM231 160h1v1h-1zM230 161h1v1h-1zM249 160h1v1h-1zM248 161h1v1h-1zM267 160h1v1h-1zM266 161h1v1h-1zM285 160h1v1h-1zM284 161h1v1h-1zM303 160h1v1h-1zM302 161h1v1h-1zM321 160h1v1h-1zM320 161h1v1h-1zM339 160h1v1h-1zM338 161h1v1h-1zM357 160h1v1h-1zM356 161h1v1h-1zM375 160h1v1h-1zM374 161h1v1h-1zM393 160h1v1h-1zM392 161h1v1h-1zM411 160h1v1h-1zM410 161h1v1h-1zM429 160h1v1h-1zM428 161h1v1h-1zM447 160h1v1h-1zM446 161h1v1h-1zM465 160h1v1h-1zM464 161h1v1h-1zM484 160h1v1h-1zM483 161h1v1h-1zM502 160h1v1h-1zM501 161h1v1h-1zM520 160h1v1h-1zM519 161h1v1h-1zM538 160h1v1h-1zM537 161h1v1h-1zM556 160h1v1h-1zM555 161h1v1h-1zM574 160h1v1h-1zM573 161h1v1h-1zM592 160h1v1h-1zM591 161h1v1h-1zM610 160h1v1h-1zM609 161h1v1h-1zM628 160h1v1h-1zM627 161h1v1h-1zM646 160h1v1h-1zM645 161h1v1h-1zM32 178h1v1h-1zM31 179h1v1h-1zM50 178h1v1h-1zM49 179h1v1h-1zM68 178h1v1h-1zM67 179h1v1h-1zM86 178h1v1h-1zM85 179h1v1h-1zM104 178h1v1h-1zM103 179h1v1h-1zM122 178h1v1h-1zM121 179h1v1h-1zM140 178h1v1h-1zM139 179h1v1h-1zM158 178h1v1h-1zM157 179h1v1h-1zM176 178h1v1h-1zM175 179h1v1h-1zM194 178h1v1h-1zM193 179h1v1h-1zM213 178h1v1h-1zM212 179h1v1h-1zM231 178h1v1h-1zM230 179h1v1h-1zM249 178h1v1h-1zM248 179h1v1h-1zM267 178h1v1h-1zM266 179h1v1h-1zM285 178h1v1h-1zM284 179h1v1h-1zM303 178h1v1h-1zM302 179h1v1h-1zM321 178h1v1h-1zM320 179h1v1h-1zM339 178h1v1h-1zM338 179h1v1h-1zM357 178h1v1h-1zM356 179h1v1h-1zM375 178h1v1h-1zM374 179h1v1h-1zM393 178h1v1h-1zM392 179h1v1h-1zM411 178h1v1h-1zM410 179h1v1h-1zM429 178h1v1h-1zM428 179h1v1h-1zM447 178h1v1h-1zM446 179h1v1h-1zM465 178h1v1h-1zM464 179h1v1h-1zM484 178h1v1h-1zM483 179h1v1h-1zM502 178h1v1h-1zM501 179h1v1h-1zM520 178h1v1h-1zM519 179h1v1h-1zM538 178h1v1h-1zM537 179h1v1h-1zM556 178h1v1h-1zM555 179h1v1h-1zM574 178h1v1h-1zM573 179h1v1h-1zM592 178h1v1h-1zM591 179h1v1h-1zM610 178h1v1h-1zM609 179h1v1h-1zM628 178h1v1h-1zM627 179h1v1h-1zM646 178h1v1h-1zM645 179h1v1h-1zM32 196h1v1h-1zM31 197h1v1h-1zM50 196h1v1h-1zM49 197h1v1h-1zM68 196h1v1h-1zM67 197h1v1h-1zM86 196h1v1h-1zM85 197h1v1h-1zM104 196h1v1h-1zM103 197h1v1h-1zM122 196h1v1h-1zM121 197h1v1h-1zM140 196h1v1h-1zM139 197h1v1h-1zM158 196h1v1h-1zM157 197h1v1h-1zM176 196h1v1h-1zM175 197h1v1h-1zM194 196h1v1h-1zM193 197h1v1h-1zM213 196h1v1h-1zM212 197h1v1h-1zM231 196h1v1h-1zM230 197h1v1h-1zM249 196h1v1h-1zM248 197h1v1h-1zM267 196h1v1h-1zM266 197h1v1h-1zM285 196h1v1h-1zM284 197h1v1h-1zM303 196h1v1h-1zM302 197h1v1h-1zM321 196h1v1h-1zM320 197h1v1h-1zM339 196h1v1h-1zM338 197h1v1h-1zM357 196h1v1h-1zM356 197h1v1h-1zM375 196h1v1h-1zM374 197h1v1h-1zM393 196h1v1h-1zM392 197h1v1h-1zM411 196h1v1h-1zM410 197h1v1h-1zM429 196h1v1h-1zM428 197h1v1h-1zM447 196h1v1h-1zM446 197h1v1h-1zM465 196h1v1h-1zM464 197h1v1h-1zM484 196h1v1h-1zM483 197h1v1h-1zM502 196h1v1h-1zM501 197h1v1h-1zM520 196h1v1h-1zM519 197h1v1h-1zM538 196h1v1h-1zM537 197h1v1h-1zM556 196h1v1h-1zM555 197h1v1h-1zM574 196h1v1h-1zM573 197h1v1h-1zM592 196h1v1h-1zM591 197h1v1h-1zM610 196h1v1h-1zM609 197h1v1h-1zM628 196h1v1h-1zM627 197h1v1h-1zM646 196h1v1h-1zM645 197h1v1h-1zM32 214h1v1h-1zM31 215h1v1h-1zM50 214h1v1h-1zM49 215h1v1h-1zM68 214h1v1h-1zM67 215h1v1h-1zM86 214h1v1h-1zM85 215h1v1h-1zM104 214h1v1h-1zM103 215h1v1h-1zM122 214h1v1h-1zM121 215h1v1h-1zM140 214h1v1h-1zM139 215h1v1h-1zM158 214h1v1h-1zM157 215h1v1h-1zM176 214h1v1h-1zM175 215h1v1h-1zM194 214h1v1h-1zM193 215h1v1h-1zM213 214h1v1h-1zM212 215h1v1h-1zM231 214h1v1h-1zM230 215h1v1h-1zM249 214h1v1h-1zM248 215h1v1h-1zM267 214h1v1h-1zM266 215h1v1h-1zM285 214h1v1h-1zM284 215h1v1h-1zM303 214h1v1h-1zM302 215h1v1h-1zM321 214h1v1h-1zM320 215h1v1h-1zM339 214h1v1h-1zM338 215h1v1h-1zM357 214h1v1h-1zM356 215h1v1h-1zM375 214h1v1h-1zM374 215h1v1h-1zM393 214h1v1h-1zM392 215h1v1h-1zM411 214h1v1h-1zM410 215h1v1h-1zM429 214h1v1h-1zM428 215h1v1h-1zM447 214h1v1h-1zM446 215h1v1h-1zM465 214h1v1h-1zM464 215h1v1h-1zM484 214h1v1h-1zM483 215h1v1h-1zM502 214h1v1h-1zM501 215h1v1h-1zM520 214h1v1h-1zM519 215h1v1h-1zM538 214h1v1h-1zM537 215h1v1h-1zM556 214h1v1h-1zM555 215h1v1h-1zM574 214h1v1h-1zM573 215h1v1h-1zM592 214h1v1h-1zM591 215h1v1h-1zM610 214h1v1h-1zM609 215h1v1h-1zM628 214h1v1h-1zM627 215h1v1h-1zM646 214h1v1h-1zM645 215h1v1h-1zM32 232h1v1h-1zM31 233h1v1h-1zM50 232h1v1h-1zM49 233h1v1h-1zM68 232h1v1h-1zM67 233h1v1h-1zM86 232h1v1h-1zM85 233h1v1h-1zM104 232h1v1h-1zM103 233h1v1h-1zM122 232h1v1h-1zM121 233h1v1h-1zM140 232h1v1h-1zM139 233h1v1h-1zM158 232h1v1h-1zM157 233h1v1h-1zM176 232h1v1h-1zM175 233h1v1h-1zM194 232h1v1h-1zM193 233h1v1h-1zM213 232h1v1h-1zM212 233h1v1h-1zM231 232h1v1h-1zM230 233h1v1h-1zM249 232h1v1h-1zM248 233h1v1h-1zM267 232h1v1h-1zM266 233h1v1h-1zM285 232h1v1h-1zM284 233h1v1h-1zM303 232h1v1h-1zM302 233h1v1h-1zM321 232h1v1h-1zM320 233h1v1h-1zM339 232h1v1h-1zM338 233h1v1h-1zM357 232h1v1h-1zM356 233h1v1h-1zM375 232h1v1h-1zM374 233h1v1h-1zM393 232h1v1h-1zM392 233h1v1h-1zM411 232h1v1h-1zM410 233h1v1h-1zM429 232h1v1h-1zM428 233h1v1h-1zM447 232h1v1h-1zM446 233h1v1h-1zM465 232h1v1h-1zM464 233h1v1h-1zM484 232h1v1h-1zM483 233h1v1h-1zM502 232h1v1h-1zM501 233h1v1h-1zM520 232h1v1h-1zM519 233h1v1h-1zM538 232h1v1h-1zM537 233h1v1h-1zM556 232h1v1h-1zM555 233h1v1h-1zM574 232h1v1h-1zM573 233h1v1h-1zM592 232h1v1h-1zM591 233h1v1h-1zM610 232h1v1h-1zM609 233h1v1h-1zM628 232h1v1h-1zM627 233h1v1h-1zM646 232h1v1h-1zM645 233h1v1h-1zM32 251h1v1h-1zM31 252h1v1h-1zM50 251h1v1h-1zM49 252h1v1h-1zM68 251h1v1h-1zM67 252h1v1h-1zM86 251h1v1h-1zM85 252h1v1h-1zM104 251h1v1h-1zM103 252h1v1h-1zM122 251h1v1h-1zM121 252h1v1h-1zM140 251h1v1h-1zM139 252h1v1h-1zM158 251h1v1h-1zM157 252h1v1h-1zM176 251h1v1h-1zM175 252h1v1h-1zM194 251h1v1h-1zM193 252h1v1h-1zM213 251h1v1h-1zM212 252h1v1h-1zM231 251h1v1h-1zM230 252h1v1h-1zM249 251h1v1h-1zM248 252h1v1h-1zM267 251h1v1h-1zM266 252h1v1h-1zM285 251h1v1h-1zM284 252h1v1h-1zM303 251h1v1h-1zM302 252h1v1h-1zM321 251h1v1h-1zM320 252h1v1h-1zM339 251h1v1h-1zM338 252h1v1h-1zM357 251h1v1h-1zM356 252h1v1h-1zM375 251h1v1h-1zM374 252h1v1h-1zM393 251h1v1h-1zM392 252h1v1h-1zM411 251h1v1h-1zM410 252h1v1h-1zM429 251h1v1h-1zM428 252h1v1h-1zM447 251h1v1h-1zM446 252h1v1h-1zM465 251h1v1h-1zM464 252h1v1h-1zM484 251h1v1h-1zM483 252h1v1h-1zM502 251h1v1h-1zM501 252h1v1h-1zM520 251h1v1h-1zM519 252h1v1h-1zM538 251h1v1h-1zM537 252h1v1h-1zM556 251h1v1h-1zM555 252h1v1h-1zM574 251h1v1h-1zM573 252h1v1h-1zM592 251h1v1h-1zM591 252h1v1h-1zM610 251h1v1h-1zM609 252h1v1h-1zM628 251h1v1h-1zM627 252h1v1h-1zM646 251h1v1h-1zM645 252h1v1h-1zM32 269h1v1h-1zM31 270h1v1h-1zM50 269h1v1h-1zM49 270h1v1h-1zM68 269h1v1h-1zM67 270h1v1h-1zM86 269h1v1h-1zM85 270h1v1h-1zM104 269h1v1h-1zM103 270h1v1h-1zM122 269h1v1h-1zM121 270h1v1h-1zM140 269h1v1h-1zM139 270h1v1h-1zM158 269h1v1h-1zM157 270h1v1h-1zM176 269h1v1h-1zM175 270h1v1h-1zM194 269h1v1h-1zM193 270h1v1h-1zM213 269h1v1h-1zM212 270h1v1h-1zM231 269h1v1h-1zM230 270h1v1h-1zM249 269h1v1h-1zM248 270h1v1h-1zM267 269h1v1h-1zM266 270h1v1h-1zM285 269h1v1h-1zM284 270h1v1h-1zM303 269h1v1h-1zM302 270h1v1h-1zM321 269h1v1h-1zM320 270h1v1h-1zM339 269h1v1h-1zM338 270h1v1h-1zM357 269h1v1h-1zM356 270h1v1h-1zM375 269h1v1h-1zM374 270h1v1h-1zM393 269h1v1h-1zM392 270h1v1h-1zM411 269h1v1h-1zM410 270h1v1h-1zM429 269h1v1h-1zM428 270h1v1h-1zM447 269h1v1h-1zM446 270h1v1h-1zM465 269h1v1h-1zM464 270h1v1h-1zM484 269h1v1h-1zM483 270h1v1h-1zM502 269h1v1h-1zM501 270h1v1h-1zM520 269h1v1h-1zM519 270h1v1h-1zM538 269h1v1h-1zM537 270h1v1h-1zM556 269h1v1h-1zM555 270h1v1h-1zM574 269h1v1h-1zM573 270h1v1h-1zM592 269h1v1h-1zM591 270h1v1h-1zM610 269h1v1h-1zM609 270h1v1h-1zM628 269h1v1h-1zM627 270h1v1h-1zM646 269h1v1h-1zM645 270h1v1h-1zM32 287h1v1h-1zM31 288h1v1h-1zM50 287h1v1h-1zM49 288h1v1h-1zM68 287h1v1h-1zM67 288h1v1h-1zM86 287h1v1h-1zM85 288h1v1h-1zM104 287h1v1h-1zM103 288h1v1h-1zM122 287h1v1h-1zM121 288h1v1h-1zM140 287h1v1h-1zM139 288h1v1h-1zM158 287h1v1h-1zM157 288h1v1h-1zM176 287h1v1h-1zM175 288h1v1h-1zM194 287h1v1h-1zM193 288h1v1h-1zM213 287h1v1h-1zM212 288h1v1h-1zM231 287h1v1h-1zM230 288h1v1h-1zM249 287h1v1h-1zM248 288h1v1h-1zM267 287h1v1h-1zM266 288h1v1h-1zM285 287h1v1h-1zM284 288h1v1h-1zM303 287h1v1h-1zM302 288h1v1h-1zM321 287h1v1h-1zM320 288h1v1h-1zM339 287h1v1h-1zM338 288h1v1h-1zM357 287h1v1h-1zM356 288h1v1h-1zM375 287h1v1h-1zM374 288h1v1h-1zM393 287h1v1h-1zM392 288h1v1h-1zM411 287h1v1h-1zM410 288h1v1h-1zM429 287h1v1h-1zM428 288h1v1h-1zM447 287h1v1h-1zM446 288h1v1h-1zM465 287h1v1h-1zM464 288h1v1h-1zM484 287h1v1h-1zM483 288h1v1h-1zM502 287h1v1h-1zM501 288h1v1h-1zM520 287h1v1h-1zM519 288h1v1h-1zM538 287h1v1h-1zM537 288h1v1h-1zM556 287h1v1h-1zM555 288h1v1h-1zM574 287h1v1h-1zM573 288h1v1h-1zM592 287h1v1h-1zM591 288h1v1h-1zM610 287h1v1h-1zM609 288h1v1h-1zM628 287h1v1h-1zM627 288h1v1h-1zM646 287h1v1h-1zM645 288h1v1h-1zM32 305h1v1h-1zM31 306h1v1h-1zM50 305h1v1h-1zM49 306h1v1h-1zM68 305h1v1h-1zM67 306h1v1h-1zM86 305h1v1h-1zM85 306h1v1h-1zM104 305h1v1h-1zM103 306h1v1h-1zM122 305h1v1h-1zM121 306h1v1h-1zM140 305h1v1h-1zM139 306h1v1h-1zM158 305h1v1h-1zM157 306h1v1h-1zM176 305h1v1h-1zM175 306h1v1h-1zM194 305h1v1h-1zM193 306h1v1h-1zM213 305h1v1h-1zM212 306h1v1h-1zM231 305h1v1h-1zM230 306h1v1h-1zM249 305h1v1h-1zM248 306h1v1h-1zM267 305h1v1h-1zM266 306h1v1h-1zM285 305h1v1h-1zM284 306h1v1h-1zM303 305h1v1h-1zM302 306h1v1h-1zM321 305h1v1h-1zM320 306h1v1h-1zM339 305h1v1h-1zM338 306h1v1h-1zM357 305h1v1h-1zM356 306h1v1h-1zM375 305h1v1h-1zM374 306h1v1h-1zM393 305h1v1h-1zM392 306h1v1h-1zM411 305h1v1h-1zM410 306h1v1h-1zM429 305h1v1h-1zM428 306h1v1h-1zM447 305h1v1h-1zM446 306h1v1h-1zM465 305h1v1h-1zM464 306h1v1h-1zM484 305h1v1h-1zM483 306h1v1h-1zM502 305h1v1h-1zM501 306h1v1h-1zM520 305h1v1h-1zM519 306h1v1h-1zM538 305h1v1h-1zM537 306h1v1h-1zM556 305h1v1h-1zM555 306h1v1h-1zM574 305h1v1h-1zM573 306h1v1h-1zM592 305h1v1h-1zM591 306h1v1h-1zM610 305h1v1h-1zM609 306h1v1h-1zM628 305h1v1h-1zM627 306h1v1h-1zM646 305h1v1h-1zM645 306h1v1h-1zM32 323h1v1h-1zM31 324h1v1h-1zM50 323h1v1h-1zM49 324h1v1h-1zM68 323h1v1h-1zM67 324h1v1h-1zM86 323h1v1h-1zM85 324h1v1h-1zM104 323h1v1h-1zM103 324h1v1h-1zM122 323h1v1h-1zM121 324h1v1h-1zM140 323h1v1h-1zM139 324h1v1h-1zM158 323h1v1h-1zM157 324h1v1h-1zM176 323h1v1h-1zM175 324h1v1h-1zM194 323h1v1h-1zM193 324h1v1h-1zM213 323h1v1h-1zM212 324h1v1h-1zM231 323h1v1h-1zM230 324h1v1h-1zM249 323h1v1h-1zM248 324h1v1h-1zM267 323h1v1h-1zM266 324h1v1h-1zM285 323h1v1h-1zM284 324h1v1h-1zM303 323h1v1h-1zM302 324h1v1h-1zM321 323h1v1h-1zM320 324h1v1h-1zM339 323h1v1h-1zM338 324h1v1h-1zM357 323h1v1h-1zM356 324h1v1h-1zM375 323h1v1h-1zM374 324h1v1h-1zM393 323h1v1h-1zM392 324h1v1h-1zM411 323h1v1h-1zM410 324h1v1h-1zM429 323h1v1h-1zM428 324h1v1h-1zM447 323h1v1h-1zM446 324h1v1h-1zM465 323h1v1h-1zM464 324h1v1h-1zM484 323h1v1h-1zM483 324h1v1h-1zM502 323h1v1h-1zM501 324h1v1h-1zM520 323h1v1h-1zM519 324h1v1h-1zM538 323h1v1h-1zM537 324h1v1h-1zM556 323h1v1h-1zM555 324h1v1h-1zM574 323h1v1h-1zM573 324h1v1h-1zM592 323h1v1h-1zM591 324h1v1h-1zM610 323h1v1h-1zM609 324h1v1h-1zM628 323h1v1h-1zM627 324h1v1h-1zM646 323h1v1h-1zM645 324h1v1h-1zM32 341h1v1h-1zM31 342h1v1h-1zM50 341h1v1h-1zM49 342h1v1h-1zM68 341h1v1h-1zM67 342h1v1h-1zM86 341h1v1h-1zM85 342h1v1h-1zM104 341h1v1h-1zM103 342h1v1h-1zM122 341h1v1h-1zM121 342h1v1h-1zM140 341h1v1h-1zM139 342h1v1h-1zM158 341h1v1h-1zM157 342h1v1h-1zM176 341h1v1h-1zM175 342h1v1h-1zM194 341h1v1h-1zM193 342h1v1h-1zM213 341h1v1h-1zM212 342h1v1h-1zM231 341h1v1h-1zM230 342h1v1h-1zM249 341h1v1h-1zM248 342h1v1h-1zM267 341h1v1h-1zM266 342h1v1h-1zM285 341h1v1h-1zM284 342h1v1h-1zM303 341h1v1h-1zM302 342h1v1h-1zM321 341h1v1h-1zM320 342h1v1h-1zM339 341h1v1h-1zM338 342h1v1h-1zM357 341h1v1h-1zM356 342h1v1h-1zM375 341h1v1h-1zM374 342h1v1h-1zM393 341h1v1h-1zM392 342h1v1h-1zM411 341h1v1h-1zM410 342h1v1h-1zM429 341h1v1h-1zM428 342h1v1h-1zM447 341h1v1h-1zM446 342h1v1h-1zM465 341h1v1h-1zM464 342h1v1h-1zM484 341h1v1h-1zM483 342h1v1h-1zM502 341h1v1h-1zM501 342h1v1h-1zM520 341h1v1h-1zM519 342h1v1h-1zM538 341h1v1h-1zM537 342h1v1h-1zM556 341h1v1h-1zM555 342h1v1h-1zM574 341h1v1h-1zM573 342h1v1h-1zM592 341h1v1h-1zM591 342h1v1h-1zM610 341h1v1h-1zM609 342h1v1h-1zM628 341h1v1h-1zM627 342h1v1h-1zM646 341h1v1h-1zM645 342h1v1h-1zM32 359h1v1h-1zM31 360h1v1h-1zM50 359h1v1h-1zM49 360h1v1h-1zM68 359h1v1h-1zM67 360h1v1h-1zM86 359h1v1h-1zM85 360h1v1h-1zM104 359h1v1h-1zM103 360h1v1h-1zM122 359h1v1h-1zM121 360h1v1h-1zM140 359h1v1h-1zM139 360h1v1h-1zM158 359h1v1h-1zM157 360h1v1h-1zM176 359h1v1h-1zM175 360h1v1h-1zM194 359h1v1h-1zM193 360h1v1h-1zM213 359h1v1h-1zM212 360h1v1h-1zM231 359h1v1h-1zM230 360h1v1h-1zM249 359h1v1h-1zM248 360h1v1h-1zM267 359h1v1h-1zM266 360h1v1h-1zM285 359h1v1h-1zM284 360h1v1h-1zM303 359h1v1h-1zM302 360h1v1h-1zM321 359h1v1h-1zM320 360h1v1h-1zM339 359h1v1h-1zM338 360h1v1h-1zM357 359h1v1h-1zM356 360h1v1h-1zM375 359h1v1h-1zM374 360h1v1h-1zM393 359h1v1h-1zM392 360h1v1h-1zM411 359h1v1h-1zM410 360h1v1h-1zM429 359h1v1h-1zM428 360h1v1h-1zM447 359h1v1h-1zM446 360h1v1h-1zM465 359h1v1h-1zM464 360h1v1h-1zM484 359h1v1h-1zM483 360h1v1h-1zM502 359h1v1h-1zM501 360h1v1h-1zM520 359h1v1h-1zM519 360h1v1h-1zM538 359h1v1h-1zM537 360h1v1h-1zM556 359h1v1h-1zM555 360h1v1h-1zM574 359h1v1h-1zM573 360h1v1h-1zM592 359h1v1h-1zM591 360h1v1h-1zM610 359h1v1h-1zM609 360h1v1h-1zM628 359h1v1h-1zM627 360h1v1h-1zM646 359h1v1h-1zM645 360h1v1h-1zM32 377h1v1h-1zM31 378h1v1h-1zM50 377h1v1h-1zM49 378h1v1h-1zM68 377h1v1h-1zM67 378h1v1h-1zM86 377h1v1h-1zM85 378h1v1h-1zM104 377h1v1h-1zM103 378h1v1h-1zM122 377h1v1h-1zM121 378h1v1h-1zM140 377h1v1h-1zM139 378h1v1h-1zM158 377h1v1h-1zM157 378h1v1h-1zM176 377h1v1h-1zM175 378h1v1h-1zM194 377h1v1h-1zM193 378h1v1h-1zM213 377h1v1h-1zM212 378h1v1h-1zM231 377h1v1h-1zM230 378h1v1h-1zM249 377h1v1h-1zM248 378h1v1h-1zM267 377h1v1h-1zM266 378h1v1h-1zM285 377h1v1h-1zM284 378h1v1h-1zM303 377h1v1h-1zM302 378h1v1h-1zM321 377h1v1h-1zM320 378h1v1h-1zM339 377h1v1h-1zM338 378h1v1h-1zM357 377h1v1h-1zM356 378h1v1h-1zM375 377h1v1h-1zM374 378h1v1h-1zM393 377h1v1h-1zM392 378h1v1h-1zM411 377h1v1h-1zM410 378h1v1h-1zM429 377h1v1h-1zM428 378h1v1h-1zM447 377h1v1h-1zM446 378h1v1h-1zM465 377h1v1h-1zM464 378h1v1h-1zM484 377h1v1h-1zM483 378h1v1h-1zM502 377h1v1h-1zM501 378h1v1h-1zM520 377h1v1h-1zM519 378h1v1h-1zM538 377h1v1h-1zM537 378h1v1h-1zM556 377h1v1h-1zM555 378h1v1h-1zM574 377h1v1h-1zM573 378h1v1h-1zM592 377h1v1h-1zM591 378h1v1h-1zM610 377h1v1h-1zM609 378h1v1h-1zM628 377h1v1h-1zM627 378h1v1h-1zM646 377h1v1h-1zM645 378h1v1h-1zM32 395h1v1h-1zM31 396h1v1h-1zM50 395h1v1h-1zM49 396h1v1h-1zM68 395h1v1h-1zM67 396h1v1h-1zM86 395h1v1h-1zM85 396h1v1h-1zM104 395h1v1h-1zM103 396h1v1h-1zM122 395h1v1h-1zM121 396h1v1h-1zM140 395h1v1h-1zM139 396h1v1h-1zM158 395h1v1h-1zM157 396h1v1h-1zM176 395h1v1h-1zM175 396h1v1h-1zM194 395h1v1h-1zM193 396h1v1h-1zM213 395h1v1h-1zM212 396h1v1h-1zM231 395h1v1h-1zM230 396h1v1h-1zM249 395h1v1h-1zM248 396h1v1h-1zM267 395h1v1h-1zM266 396h1v1h-1zM285 395h1v1h-1zM284 396h1v1h-1zM303 395h1v1h-1zM302 396h1v1h-1zM321 395h1v1h-1zM320 396h1v1h-1zM339 395h1v1h-1zM338 396h1v1h-1zM357 395h1v1h-1zM356 396h1v1h-1zM375 395h1v1h-1zM374 396h1v1h-1zM393 395h1v1h-1zM392 396h1v1h-1zM411 395h1v1h-1zM410 396h1v1h-1zM429 395h1v1h-1zM428 396h1v1h-1zM447 395h1v1h-1zM446 396h1v1h-1zM465 395h1v1h-1zM464 396h1v1h-1zM484 395h1v1h-1zM483 396h1v1h-1zM502 395h1v1h-1zM501 396h1v1h-1zM520 395h1v1h-1zM519 396h1v1h-1zM538 395h1v1h-1zM537 396h1v1h-1zM556 395h1v1h-1zM555 396h1v1h-1zM574 395h1v1h-1zM573 396h1v1h-1zM592 395h1v1h-1zM591 396h1v1h-1zM610 395h1v1h-1zM609 396h1v1h-1zM628 395h1v1h-1zM627 396h1v1h-1zM646 395h1v1h-1zM645 396h1v1h-1zM32 413h1v1h-1zM31 414h1v1h-1zM50 413h1v1h-1zM49 414h1v1h-1zM68 413h1v1h-1zM67 414h1v1h-1zM86 413h1v1h-1zM85 414h1v1h-1zM104 413h1v1h-1zM103 414h1v1h-1zM122 413h1v1h-1zM121 414h1v1h-1zM140 413h1v1h-1zM139 414h1v1h-1zM158 413h1v1h-1zM157 414h1v1h-1zM176 413h1v1h-1zM175 414h1v1h-1zM194 413h1v1h-1zM193 414h1v1h-1zM213 413h1v1h-1zM212 414h1v1h-1zM231 413h1v1h-1zM230 414h1v1h-1zM249 413h1v1h-1zM248 414h1v1h-1zM267 413h1v1h-1zM266 414h1v1h-1zM285 413h1v1h-1zM284 414h1v1h-1zM303 413h1v1h-1zM302 414h1v1h-1zM321 413h1v1h-1zM320 414h1v1h-1zM339 413h1v1h-1zM338 414h1v1h-1zM357 413h1v1h-1zM356 414h1v1h-1zM375 413h1v1h-1zM374 414h1v1h-1zM393 413h1v1h-1zM392 414h1v1h-1zM411 413h1v1h-1zM410 414h1v1h-1zM429 413h1v1h-1zM428 414h1v1h-1zM447 413h1v1h-1zM446 414h1v1h-1zM465 413h1v1h-1zM464 414h1v1h-1zM484 413h1v1h-1zM483 414h1v1h-1zM502 413h1v1h-1zM501 414h1v1h-1zM520 413h1v1h-1zM519 414h1v1h-1zM538 413h1v1h-1zM537 414h1v1h-1zM556 413h1v1h-1zM555 414h1v1h-1zM574 413h1v1h-1zM573 414h1v1h-1zM592 413h1v1h-1zM591 414h1v1h-1zM610 413h1v1h-1zM609 414h1v1h-1zM628 413h1v1h-1zM627 414h1v1h-1zM646 413h1v1h-1zM645 414h1v1h-1zM32 431h1v1h-1zM31 432h1v1h-1zM50 431h1v1h-1zM49 432h1v1h-1zM68 431h1v1h-1zM67 432h1v1h-1zM86 431h1v1h-1zM85 432h1v1h-1zM104 431h1v1h-1zM103 432h1v1h-1zM122 431h1v1h-1zM121 432h1v1h-1zM140 431h1v1h-1zM139 432h1v1h-1zM158 431h1v1h-1zM157 432h1v1h-1zM176 431h1v1h-1zM175 432h1v1h-1zM194 431h1v1h-1zM193 432h1v1h-1zM213 431h1v1h-1zM212 432h1v1h-1zM231 431h1v1h-1zM230 432h1v1h-1zM249 431h1v1h-1zM248 432h1v1h-1zM267 431h1v1h-1zM266 432h1v1h-1zM285 431h1v1h-1zM284 432h1v1h-1zM303 431h1v1h-1zM302 432h1v1h-1zM321 431h1v1h-1zM320 432h1v1h-1zM339 431h1v1h-1zM338 432h1v1h-1zM357 431h1v1h-1zM356 432h1v1h-1zM375 431h1v1h-1zM374 432h1v1h-1zM393 431h1v1h-1zM392 432h1v1h-1zM411 431h1v1h-1zM410 432h1v1h-1zM429 431h1v1h-1zM428 432h1v1h-1zM447 431h1v1h-1zM446 432h1v1h-1zM465 431h1v1h-1zM464 432h1v1h-1zM484 431h1v1h-1zM483 432h1v1h-1zM502 431h1v1h-1zM501 432h1v1h-1zM520 431h1v1h-1zM519 432h1v1h-1zM538 431h1v1h-1zM537 432h1v1h-1zM556 431h1v1h-1zM555 432h1v1h-1zM574 431h1v1h-1zM573 432h1v1h-1zM592 431h1v1h-1zM591 432h1v1h-1zM610 431h1v1h-1zM609 432h1v1h-1zM628 431h1v1h-1zM627 432h1v1h-1zM646 431h1v1h-1zM645 432h1v1h-1zM32 449h1v1h-1zM31 450h1v1h-1zM50 449h1v1h-1zM49 450h1v1h-1zM68 449h1v1h-1zM67 450h1v1h-1zM86 449h1v1h-1zM85 450h1v1h-1zM104 449h1v1h-1zM103 450h1v1h-1zM122 449h1v1h-1zM121 450h1v1h-1zM140 449h1v1h-1zM139 450h1v1h-1zM158 449h1v1h-1zM157 450h1v1h-1zM176 449h1v1h-1zM175 450h1v1h-1zM194 449h1v1h-1zM193 450h1v1h-1zM213 449h1v1h-1zM212 450h1v1h-1zM231 449h1v1h-1zM230 450h1v1h-1zM249 449h1v1h-1zM248 450h1v1h-1zM267 449h1v1h-1zM266 450h1v1h-1zM285 449h1v1h-1zM284 450h1v1h-1zM303 449h1v1h-1zM302 450h1v1h-1zM321 449h1v1h-1zM320 450h1v1h-1zM339 449h1v1h-1zM338 450h1v1h-1zM357 449h1v1h-1zM356 450h1v1h-1zM375 449h1v1h-1zM374 450h1v1h-1zM393 449h1v1h-1zM392 450h1v1h-1zM411 449h1v1h-1zM410 450h1v1h-1zM429 449h1v1h-1zM428 450h1v1h-1zM447 449h1v1h-1zM446 450h1v1h-1zM465 449h1v1h-1zM464 450h1v1h-1zM484 449h1v1h-1zM483 450h1v1h-1zM502 449h1v1h-1zM501 450h1v1h-1zM520 449h1v1h-1zM519 450h1v1h-1zM538 449h1v1h-1zM537 450h1v1h-1zM556 449h1v1h-1zM555 450h1v1h-1zM574 449h1v1h-1zM573 450h1v1h-1zM592 449h1v1h-1zM591 450h1v1h-1zM610 449h1v1h-1zM609 450h1v1h-1zM628 449h1v1h-1zM627 450h1v1h-1zM646 449h1v1h-1zM645 450h1v1h-1zM32 467h1v1h-1zM31 468h1v1h-1zM50 467h1v1h-1zM49 468h1v1h-1zM68 467h1v1h-1zM67 468h1v1h-1zM86 467h1v1h-1zM85 468h1v1h-1zM104 467h1v1h-1zM103 468h1v1h-1zM122 467h1v1h-1zM121 468h1v1h-1zM140 467h1v1h-1zM139 468h1v1h-1zM158 467h1v1h-1zM157 468h1v1h-1zM176 467h1v1h-1zM175 468h1v1h-1zM194 467h1v1h-1zM193 468h1v1h-1zM213 467h1v1h-1zM212 468h1v1h-1zM231 467h1v1h-1zM230 468h1v1h-1zM249 467h1v1h-1zM248 468h1v1h-1zM267 467h1v1h-1zM266 468h1v1h-1zM285 467h1v1h-1zM284 468h1v1h-1zM303 467h1v1h-1zM302 468h1v1h-1zM321 467h1v1h-1zM320 468h1v1h-1zM339 467h1v1h-1zM338 468h1v1h-1zM357 467h1v1h-1zM356 468h1v1h-1zM375 467h1v1h-1zM374 468h1v1h-1zM393 467h1v1h-1zM392 468h1v1h-1zM411 467h1v1h-1zM410 468h1v1h-1zM429 467h1v1h-1zM428 468h1v1h-1zM447 467h1v1h-1zM446 468h1v1h-1zM465 467h1v1h-1zM464 468h1v1h-1zM484 467h1v1h-1zM483 468h1v1h-1zM502 467h1v1h-1zM501 468h1v1h-1zM520 467h1v1h-1zM519 468h1v1h-1zM538 467h1v1h-1zM537 468h1v1h-1zM556 467h1v1h-1zM555 468h1v1h-1zM574 467h1v1h-1zM573 468h1v1h-1zM592 467h1v1h-1zM591 468h1v1h-1zM610 467h1v1h-1zM609 468h1v1h-1zM628 467h1v1h-1zM627 468h1v1h-1zM646 467h1v1h-1zM645 468h1v1h-1zM32 485h1v1h-1zM31 486h1v1h-1zM50 485h1v1h-1zM49 486h1v1h-1zM68 485h1v1h-1zM67 486h1v1h-1zM86 485h1v1h-1zM85 486h1v1h-1zM104 485h1v1h-1zM103 486h1v1h-1zM122 485h1v1h-1zM121 486h1v1h-1zM140 485h1v1h-1zM139 486h1v1h-1zM158 485h1v1h-1zM157 486h1v1h-1zM176 485h1v1h-1zM175 486h1v1h-1zM194 485h1v1h-1zM193 486h1v1h-1zM213 485h1v1h-1zM212 486h1v1h-1zM231 485h1v1h-1zM230 486h1v1h-1zM249 485h1v1h-1zM248 486h1v1h-1zM267 485h1v1h-1zM266 486h1v1h-1zM285 485h1v1h-1zM284 486h1v1h-1zM303 485h1v1h-1zM302 486h1v1h-1zM321 485h1v1h-1zM320 486h1v1h-1zM339 485h1v1h-1zM338 486h1v1h-1zM357 485h1v1h-1zM356 486h1v1h-1zM375 485h1v1h-1zM374 486h1v1h-1zM393 485h1v1h-1zM392 486h1v1h-1zM411 485h1v1h-1zM410 486h1v1h-1zM429 485h1v1h-1zM428 486h1v1h-1zM447 485h1v1h-1zM446 486h1v1h-1zM465 485h1v1h-1zM464 486h1v1h-1zM484 485h1v1h-1zM483 486h1v1h-1zM502 485h1v1h-1zM501 486h1v1h-1zM520 485h1v1h-1zM519 486h1v1h-1zM538 485h1v1h-1zM537 486h1v1h-1zM556 485h1v1h-1zM555 486h1v1h-1zM574 485h1v1h-1zM573 486h1v1h-1zM592 485h1v1h-1zM591 486h1v1h-1zM610 485h1v1h-1zM609 486h1v1h-1zM628 485h1v1h-1zM627 486h1v1h-1zM646 485h1v1h-1zM645 486h1v1h-1zM32 504h1v1h-1zM31 505h1v1h-1zM50 504h1v1h-1zM49 505h1v1h-1zM68 504h1v1h-1zM67 505h1v1h-1zM86 504h1v1h-1zM85 505h1v1h-1zM104 504h1v1h-1zM103 505h1v1h-1zM122 504h1v1h-1zM121 505h1v1h-1zM140 504h1v1h-1zM139 505h1v1h-1zM158 504h1v1h-1zM157 505h1v1h-1zM176 504h1v1h-1zM175 505h1v1h-1zM194 504h1v1h-1zM193 505h1v1h-1zM213 504h1v1h-1zM212 505h1v1h-1zM231 504h1v1h-1zM230 505h1v1h-1zM249 504h1v1h-1zM248 505h1v1h-1zM267 504h1v1h-1zM266 505h1v1h-1zM285 504h1v1h-1zM284 505h1v1h-1zM303 504h1v1h-1zM302 505h1v1h-1zM321 504h1v1h-1zM320 505h1v1h-1zM339 504h1v1h-1zM338 505h1v1h-1zM357 504h1v1h-1zM356 505h1v1h-1zM375 504h1v1h-1zM374 505h1v1h-1zM393 504h1v1h-1zM392 505h1v1h-1zM411 504h1v1h-1zM410 505h1v1h-1zM429 504h1v1h-1zM428 505h1v1h-1zM447 504h1v1h-1zM446 505h1v1h-1zM465 504h1v1h-1zM464 505h1v1h-1zM484 504h1v1h-1zM483 505h1v1h-1zM502 504h1v1h-1zM501 505h1v1h-1zM520 504h1v1h-1zM519 505h1v1h-1zM538 504h1v1h-1zM537 505h1v1h-1zM556 504h1v1h-1zM555 505h1v1h-1zM574 504h1v1h-1zM573 505h1v1h-1zM592 504h1v1h-1zM591 505h1v1h-1zM610 504h1v1h-1zM609 505h1v1h-1zM628 504h1v1h-1zM627 505h1v1h-1zM646 504h1v1h-1zM645 505h1v1h-1zM32 522h1v1h-1zM31 523h1v1h-1zM50 522h1v1h-1zM49 523h1v1h-1zM68 522h1v1h-1zM67 523h1v1h-1zM86 522h1v1h-1zM85 523h1v1h-1zM104 522h1v1h-1zM103 523h1v1h-1zM122 522h1v1h-1zM121 523h1v1h-1zM140 522h1v1h-1zM139 523h1v1h-1zM158 522h1v1h-1zM157 523h1v1h-1zM176 522h1v1h-1zM175 523h1v1h-1zM194 522h1v1h-1zM193 523h1v1h-1zM213 522h1v1h-1zM212 523h1v1h-1zM231 522h1v1h-1zM230 523h1v1h-1zM249 522h1v1h-1zM248 523h1v1h-1zM267 522h1v1h-1zM266 523h1v1h-1zM285 522h1v1h-1zM284 523h1v1h-1zM303 522h1v1h-1zM302 523h1v1h-1zM321 522h1v1h-1zM320 523h1v1h-1zM339 522h1v1h-1zM338 523h1v1h-1zM357 522h1v1h-1zM356 523h1v1h-1zM375 522h1v1h-1zM374 523h1v1h-1zM393 522h1v1h-1zM392 523h1v1h-1zM411 522h1v1h-1zM410 523h1v1h-1zM429 522h1v1h-1zM428 523h1v1h-1zM447 522h1v1h-1zM446 523h1v1h-1zM465 522h1v1h-1zM464 523h1v1h-1zM484 522h1v1h-1zM483 523h1v1h-1zM502 522h1v1h-1zM501 523h1v1h-1zM520 522h1v1h-1zM519 523h1v1h-1zM538 522h1v1h-1zM537 523h1v1h-1zM556 522h1v1h-1zM555 523h1v1h-1zM574 522h1v1h-1zM573 523h1v1h-1zM592 522h1v1h-1zM591 523h1v1h-1zM610 522h1v1h-1zM609 523h1v1h-1zM628 522h1v1h-1zM627 523h1v1h-1zM646 522h1v1h-1zM645 523h1v1h-1zM32 540h1v1h-1zM31 541h1v1h-1zM50 540h1v1h-1zM49 541h1v1h-1zM68 540h1v1h-1zM67 541h1v1h-1zM86 540h1v1h-1zM85 541h1v1h-1zM104 540h1v1h-1zM103 541h1v1h-1zM122 540h1v1h-1zM121 541h1v1h-1zM140 540h1v1h-1zM139 541h1v1h-1zM158 540h1v1h-1zM157 541h1v1h-1zM176 540h1v1h-1zM175 541h1v1h-1zM194 540h1v1h-1zM193 541h1v1h-1zM213 540h1v1h-1zM212 541h1v1h-1zM231 540h1v1h-1zM230 541h1v1h-1zM249 540h1v1h-1zM248 541h1v1h-1zM267 540h1v1h-1zM266 541h1v1h-1zM285 540h1v1h-1zM284 541h1v1h-1zM303 540h1v1h-1zM302 541h1v1h-1zM321 540h1v1h-1zM320 541h1v1h-1zM339 540h1v1h-1zM338 541h1v1h-1zM357 540h1v1h-1zM356 541h1v1h-1zM375 540h1v1h-1zM374 541h1v1h-1zM393 540h1v1h-1zM392 541h1v1h-1zM411 540h1v1h-1zM410 541h1v1h-1zM429 540h1v1h-1zM428 541h1v1h-1zM447 540h1v1h-1zM446 541h1v1h-1zM465 540h1v1h-1zM464 541h1v1h-1zM484 540h1v1h-1zM483 541h1v1h-1zM502 540h1v1h-1zM501 541h1v1h-1zM520 540h1v1h-1zM519 541h1v1h-1zM538 540h1v1h-1zM537 541h1v1h-1zM556 540h1v1h-1zM555 541h1v1h-1zM574 540h1v1h-1zM573 541h1v1h-1zM592 540h1v1h-1zM591 541h1v1h-1zM610 540h1v1h-1zM609 541h1v1h-1zM628 540h1v1h-1zM627 541h1v1h-1zM646 540h1v1h-1zM645 541h1v1h-1z" fill="#8a8a8a" opacity="0.4"/>
<g stroke="#587078" stroke-width="0.8" opacity="0.8">
<path d="M282.6 165.0 L302 174.2"/>
<path d="M282.6 174.0 L302 174.2"/>
<path d="M282.6 183.0 L302 174.2"/>
<path d="M282.6 205.7 L302 260"/>
<path d="M282.6 214.7 L302 260"/>
<path d="M282.6 223.8 L302 260"/>
<path d="M282.6 232.8 L302 260"/>
<path d="M282.6 241.8 L302 260"/>
<path d="M282.6 250.9 L302 260"/>
<path d="M282.6 259.9 L302 260"/>
<path d="M282.6 286.7 L302 260"/>
<path d="M282.6 295.7 L302 260"/>
<path d="M282.6 304.8 L302 260"/>
<path d="M282.6 313.8 L302 260"/>
<path d="M282.6 322.8 L302 260"/>
<path d="M282.6 331.8 L302 260"/>
<path d="M282.6 340.9 L302 260"/>
<path d="M282.6 349.9 L302 260"/>
<path d="M282.6 358.9 L302 260"/>
<path d="M282.6 368.0 L302 260"/>
<path d="M282.6 377.0 L302 260"/>
<path d="M282.6 386.0 L302 260"/>
<path d="M282.6 395.1 L302 260"/>
<path d="M282.6 404.1 L302 260"/>
<path d="M282.6 413.1 L302 260"/>
<path d="M282.6 422.1 L302 260"/>
<path d="M282.6 431.2 L302 260"/>
<path d="M282.6 440.2 L302 260"/>
<path d="M282.6 449.2 L302 260"/>
<path d="M282.6 458.3 L302 260"/>
<path d="M282.6 467.3 L302 260"/>
<path d="M282.6 476.3 L302 260"/>
<path d="M282.6 485.4 L302 260"/>
<path d="M282.6 494.4 L302 260"/>
<path d="M282.6 503.4 L302 260"/>
<path d="M282.6 512.4 L302 260"/>
<path d="M282.6 521.5 L302 260"/>
<path d="M282.6 530.5 L302 260"/>
</g>
<g stroke="#587078" stroke-width="0.9"><path d="M315.7 174.2 L333.6 260"/>
<path d="M315.8 260 H333.6 M347.1 260 L365.3 246.4 M347.1 260 H365.3 M347.1 260 L365.3 273.4 M378.8 260 H397 M410.5 260 L429 250.6 M410.5 260 H429 M410.5 260 L429 268.7" stroke-width="1.3"/></g>
<g>
<path d="M266.0 165.0 H279.6" stroke="#6a6a6a" stroke-width="1.4"/>
<path d="M266.0 174.0 H279.6" stroke="#6a6a6a" stroke-width="1.4"/>
<path d="M266.0 183.0 H279.6" stroke="#6a6a6a" stroke-width="1.4"/>
<path d="M266.0 196.6 H279.6" stroke="#6a6a6a" stroke-width="1.4"/>
<path d="M266.0 205.7 H279.6" stroke="#6a6a6a" stroke-width="1.4"/>
<path d="M266.0 214.7 H279.6" stroke="#6a6a6a" stroke-width="1.4"/>
<path d="M266.0 223.8 H279.6" stroke="#6a6a6a" stroke-width="1.4"/>
<path d="M266.0 232.8 H279.6" stroke="#6a6a6a" stroke-width="1.4"/>
<path d="M266.0 241.8 H279.6" stroke="#6a6a6a" stroke-width="1.4"/>
<path d="M266.0 250.9 H279.6" stroke="#6a6a6a" stroke-width="1.4"/>
<path d="M266.0 259.9 H279.6" stroke="#6a6a6a" stroke-width="1.4"/>
<path d="M266.0 286.7 H279.6" stroke="#6a6a6a" stroke-width="1.4"/>
<path d="M266.0 295.7 H279.6" stroke="#6a6a6a" stroke-width="1.4"/>
<path d="M266.0 304.8 H279.6" stroke="#6a6a6a" stroke-width="1.4"/>
<path d="M266.0 313.8 H279.6" stroke="#6a6a6a" stroke-width="1.4"/>
<path d="M266.0 322.8 H279.6" stroke="#6a6a6a" stroke-width="1.4"/>
<path d="M266.0 331.8 H279.6" stroke="#6a6a6a" stroke-width="1.4"/>
<path d="M266.0 340.9 H279.6" stroke="#6a6a6a" stroke-width="1.4"/>
<path d="M266.0 349.9 H279.6" stroke="#6a6a6a" stroke-width="1.4"/>
<path d="M266.0 358.9 H279.6" stroke="#6a6a6a" stroke-width="1.4"/>
<path d="M266.0 368.0 H279.6" stroke="#6a6a6a" stroke-width="1.4"/>
<path d="M266.0 377.0 H279.6" stroke="#6a6a6a" stroke-width="1.4"/>
<path d="M266.0 386.0 H279.6" stroke="#6a6a6a" stroke-width="1.4"/>
<path d="M266.0 395.1 H279.6" stroke="#6a6a6a" stroke-width="1.4"/>
<path d="M266.0 404.1 H279.6" stroke="#6a6a6a" stroke-width="1.4"/>
<path d="M266.0 413.1 H279.6" stroke="#6a6a6a" stroke-width="1.4"/>
<path d="M266.0 422.1 H279.6" stroke="#6a6a6a" stroke-width="1.4"/>
<path d="M266.0 431.2 H279.6" stroke="#6a6a6a" stroke-width="1.4"/>
<path d="M266.0 440.2 H279.6" stroke="#6a6a6a" stroke-width="1.4"/>
<path d="M266.0 449.2 H279.6" stroke="#6a6a6a" stroke-width="1.4"/>
<path d="M266.0 458.3 H279.6" stroke="#6a6a6a" stroke-width="1.4"/>
<path d="M266.0 467.3 H279.6" stroke="#6a6a6a" stroke-width="1.4"/>
<path d="M266.0 476.3 H279.6" stroke="#6a6a6a" stroke-width="1.4"/>
<path d="M266.0 485.4 H279.6" stroke="#6a6a6a" stroke-width="1.4"/>
<path d="M266.0 494.4 H279.6" stroke="#6a6a6a" stroke-width="1.4"/>
<path d="M266.0 503.4 H279.6" stroke="#6a6a6a" stroke-width="1.4"/>
<path d="M266.0 512.4 H279.6" stroke="#6a6a6a" stroke-width="1.4"/>
<path d="M266.0 521.5 H279.6" stroke="#6a6a6a" stroke-width="1.4"/>
<path d="M266.0 530.5 H279.6" stroke="#6a6a6a" stroke-width="1.4"/>
<circle cx="266.0" cy="165.0" r="4.2" fill="#d9621c" stroke="#a84812" stroke-width="0.6"/>
<circle cx="266.0" cy="174.0" r="4.2" fill="#d9621c" stroke="#a84812" stroke-width="0.6"/>
<circle cx="266.0" cy="183.0" r="4.2" fill="#d9621c" stroke="#a84812" stroke-width="0.6"/>
<circle cx="266.0" cy="196.6" r="4.2" fill="#d9621c" stroke="#a84812" stroke-width="0.6"/>
<circle cx="266.0" cy="205.7" r="4.2" fill="#d9621c" stroke="#a84812" stroke-width="0.6"/>
<circle cx="266.0" cy="214.7" r="4.2" fill="#d9621c" stroke="#a84812" stroke-width="0.6"/>
<circle cx="266.0" cy="223.8" r="4.2" fill="#d9621c" stroke="#a84812" stroke-width="0.6"/>
<circle cx="266.0" cy="232.8" r="4.2" fill="#d9621c" stroke="#a84812" stroke-width="0.6"/>
<circle cx="266.0" cy="241.8" r="4.2" fill="#d9621c" stroke="#a84812" stroke-width="0.6"/>
<circle cx="266.0" cy="250.9" r="4.2" fill="#d9621c" stroke="#a84812" stroke-width="0.6"/>
<circle cx="266.0" cy="259.9" r="4.2" fill="#d9621c" stroke="#a84812" stroke-width="0.6"/>
<circle cx="266.0" cy="286.7" r="4.2" fill="#d9621c" stroke="#a84812" stroke-width="0.6"/>
<circle cx="266.0" cy="295.7" r="4.2" fill="#d9621c" stroke="#a84812" stroke-width="0.6"/>
<circle cx="266.0" cy="304.8" r="4.2" fill="#d9621c" stroke="#a84812" stroke-width="0.6"/>
<circle cx="266.0" cy="313.8" r="4.2" fill="#d9621c" stroke="#a84812" stroke-width="0.6"/>
<circle cx="266.0" cy="322.8" r="4.2" fill="#d9621c" stroke="#a84812" stroke-width="0.6"/>
<circle cx="266.0" cy="331.8" r="4.2" fill="#d9621c" stroke="#a84812" stroke-width="0.6"/>
<circle cx="266.0" cy="340.9" r="4.2" fill="#d9621c" stroke="#a84812" stroke-width="0.6"/>
<circle cx="266.0" cy="349.9" r="4.2" fill="#d9621c" stroke="#a84812" stroke-width="0.6"/>
<circle cx="266.0" cy="358.9" r="4.2" fill="#d9621c" stroke="#a84812" stroke-width="0.6"/>
<circle cx="266.0" cy="368.0" r="4.2" fill="#d9621c" stroke="#a84812" stroke-width="0.6"/>
<circle cx="266.0" cy="377.0" r="4.2" fill="#d9621c" stroke="#a84812" stroke-width="0.6"/>
<circle cx="266.0" cy="386.0" r="4.2" fill="#d9621c" stroke="#a84812" stroke-width="0.6"/>
<circle cx="266.0" cy="395.1" r="4.2" fill="#d9621c" stroke="#a84812" stroke-width="0.6"/>
<circle cx="266.0" cy="404.1" r="4.2" fill="#d9621c" stroke="#a84812" stroke-width="0.6"/>
<circle cx="266.0" cy="413.1" r="4.2" fill="#d9621c" stroke="#a84812" stroke-width="0.6"/>
<circle cx="266.0" cy="422.1" r="4.2" fill="#d9621c" stroke="#a84812" stroke-width="0.6"/>
<circle cx="266.0" cy="431.2" r="4.2" fill="#d9621c" stroke="#a84812" stroke-width="0.6"/>
<circle cx="266.0" cy="440.2" r="4.2" fill="#d9621c" stroke="#a84812" stroke-width="0.6"/>
<circle cx="266.0" cy="449.2" r="4.2" fill="#d9621c" stroke="#a84812" stroke-width="0.6"/>
<circle cx="266.0" cy="458.3" r="4.2" fill="#d9621c" stroke="#a84812" stroke-width="0.6"/>
<circle cx="266.0" cy="467.3" r="4.2" fill="#d9621c" stroke="#a84812" stroke-width="0.6"/>
<circle cx="266.0" cy="476.3" r="4.2" fill="#d9621c" stroke="#a84812" stroke-width="0.6"/>
<circle cx="266.0" cy="485.4" r="4.2" fill="#d9621c" stroke="#a84812" stroke-width="0.6"/>
<circle cx="266.0" cy="494.4" r="4.2" fill="#d9621c" stroke="#a84812" stroke-width="0.6"/>
<circle cx="266.0" cy="503.4" r="4.2" fill="#d9621c" stroke="#a84812" stroke-width="0.6"/>
<circle cx="266.0" cy="512.4" r="4.2" fill="#d9621c" stroke="#a84812" stroke-width="0.6"/>
<circle cx="266.0" cy="521.5" r="4.2" fill="#d9621c" stroke="#a84812" stroke-width="0.6"/>
<circle cx="266.0" cy="530.5" r="4.2" fill="#d9621c" stroke="#a84812" stroke-width="0.6"/>
<circle cx="279.6" cy="165.0" r="4.2" fill="#bd900c" stroke="#8a6a08" stroke-width="0.6"/>
<circle cx="279.6" cy="174.0" r="4.2" fill="#bd900c" stroke="#8a6a08" stroke-width="0.6"/>
<circle cx="279.6" cy="183.0" r="4.2" fill="#bd900c" stroke="#8a6a08" stroke-width="0.6"/>
<circle cx="279.6" cy="196.6" r="4.2" fill="#bd900c" stroke="#8a6a08" stroke-width="0.6"/>
<circle cx="279.6" cy="205.7" r="4.2" fill="#bd900c" stroke="#8a6a08" stroke-width="0.6"/>
<circle cx="279.6" cy="214.7" r="4.2" fill="#bd900c" stroke="#8a6a08" stroke-width="0.6"/>
<circle cx="279.6" cy="223.8" r="4.2" fill="#bd900c" stroke="#8a6a08" stroke-width="0.6"/>
<circle cx="279.6" cy="232.8" r="4.2" fill="#5b8ef6" stroke="#7ea8fa" stroke-width="0.8"/>
<circle cx="279.6" cy="241.8" r="4.2" fill="#bd900c" stroke="#8a6a08" stroke-width="0.6"/>
<circle cx="279.6" cy="250.9" r="4.2" fill="#bd900c" stroke="#8a6a08" stroke-width="0.6"/>
<circle cx="279.6" cy="259.9" r="4.2" fill="#bd900c" stroke="#8a6a08" stroke-width="0.6"/>
<circle cx="279.6" cy="286.7" r="4.2" fill="#bd900c" stroke="#8a6a08" stroke-width="0.6"/>
<circle cx="279.6" cy="295.7" r="4.2" fill="#bd900c" stroke="#8a6a08" stroke-width="0.6"/>
<circle cx="279.6" cy="304.8" r="4.2" fill="#bd900c" stroke="#8a6a08" stroke-width="0.6"/>
<circle cx="279.6" cy="313.8" r="4.2" fill="#bd900c" stroke="#8a6a08" stroke-width="0.6"/>
<circle cx="279.6" cy="322.8" r="4.2" fill="#bd900c" stroke="#8a6a08" stroke-width="0.6"/>
<circle cx="279.6" cy="331.8" r="4.2" fill="#bd900c" stroke="#8a6a08" stroke-width="0.6"/>
<circle cx="279.6" cy="340.9" r="4.2" fill="#bd900c" stroke="#8a6a08" stroke-width="0.6"/>
<circle cx="279.6" cy="349.9" r="4.2" fill="#bd900c" stroke="#8a6a08" stroke-width="0.6"/>
<circle cx="279.6" cy="358.9" r="4.2" fill="#bd900c" stroke="#8a6a08" stroke-width="0.6"/>
<circle cx="279.6" cy="368.0" r="4.2" fill="#bd900c" stroke="#8a6a08" stroke-width="0.6"/>
<circle cx="279.6" cy="377.0" r="4.2" fill="#bd900c" stroke="#8a6a08" stroke-width="0.6"/>
<circle cx="279.6" cy="386.0" r="4.2" fill="#bd900c" stroke="#8a6a08" stroke-width="0.6"/>
<circle cx="279.6" cy="395.1" r="4.2" fill="#bd900c" stroke="#8a6a08" stroke-width="0.6"/>
<circle cx="279.6" cy="404.1" r="4.2" fill="#bd900c" stroke="#8a6a08" stroke-width="0.6"/>
<circle cx="279.6" cy="413.1" r="4.2" fill="#bd900c" stroke="#8a6a08" stroke-width="0.6"/>
<circle cx="279.6" cy="422.1" r="4.2" fill="#bd900c" stroke="#8a6a08" stroke-width="0.6"/>
<circle cx="279.6" cy="431.2" r="4.2" fill="#bd900c" stroke="#8a6a08" stroke-width="0.6"/>
<circle cx="279.6" cy="440.2" r="4.2" fill="#bd900c" stroke="#8a6a08" stroke-width="0.6"/>
<circle cx="279.6" cy="449.2" r="4.2" fill="#bd900c" stroke="#8a6a08" stroke-width="0.6"/>
<circle cx="279.6" cy="458.3" r="4.2" fill="#bd900c" stroke="#8a6a08" stroke-width="0.6"/>
<circle cx="279.6" cy="467.3" r="4.2" fill="#bd900c" stroke="#8a6a08" stroke-width="0.6"/>
<circle cx="279.6" cy="476.3" r="4.2" fill="#bd900c" stroke="#8a6a08" stroke-width="0.6"/>
<circle cx="279.6" cy="485.4" r="4.2" fill="#bd900c" stroke="#8a6a08" stroke-width="0.6"/>
<circle cx="279.6" cy="494.4" r="4.2" fill="#bd900c" stroke="#8a6a08" stroke-width="0.6"/>
<circle cx="279.6" cy="503.4" r="4.2" fill="#bd900c" stroke="#8a6a08" stroke-width="0.6"/>
<circle cx="279.6" cy="512.4" r="4.2" fill="#bd900c" stroke="#8a6a08" stroke-width="0.6"/>
<circle cx="279.6" cy="521.5" r="4.2" fill="#bd900c" stroke="#8a6a08" stroke-width="0.6"/>
<circle cx="279.6" cy="530.5" r="4.2" fill="#bd900c" stroke="#8a6a08" stroke-width="0.6"/>
</g>
<path d="M302.3 159.5 V189.79999999999998 M302.3 158.0 H313.7 Q315.7 158.0 315.7 160.0 V162.0 M304.5 189.79999999999998 H313.7 Q315.7 189.79999999999998 315.7 187.79999999999998 V185.79999999999998" stroke="#2aa594" stroke-width="1" fill="none"/><path d="M303.5 159.2 V188.6 H314.5 V159.2z" stroke="#3a1f1f" stroke-width="0.8" fill="none"/><circle cx="309.2" cy="164.4" r="2.9" fill="#1a5f57"/><circle cx="309.2" cy="171.1" r="2.9" fill="#1a5f57"/><circle cx="309.2" cy="177.8" r="2.9" fill="#1a5f57"/><circle cx="309.2" cy="184.1" r="2.9" fill="#1a5f57"/><circle cx="302" cy="174.2" r="3.3" fill="#30b0a0"/><circle cx="315.7" cy="174.2" r="3.3" fill="#30b0a0"/>
<path d="M302.3 245.3 V275.6 M302.3 243.8 H313.8 Q315.8 243.8 315.8 245.8 V247.8 M304.5 275.6 H313.8 Q315.8 275.6 315.8 273.6 V271.6" stroke="#2aa594" stroke-width="1" fill="none"/><path d="M303.5 245.0 V274.40000000000003 H314.6 V245.0z" stroke="#3a1f1f" stroke-width="0.8" fill="none"/><circle cx="309.2" cy="250.2" r="2.9" fill="#1a5f57"/><circle cx="309.2" cy="256.9" r="2.9" fill="#1a5f57"/><circle cx="309.2" cy="263.6" r="2.9" fill="#1a5f57"/><circle cx="309.2" cy="269.9" r="2.9" fill="#1a5f57"/><circle cx="302" cy="260" r="3.3" fill="#30b0a0"/><circle cx="315.8" cy="260" r="3.3" fill="#30b0a0"/>
<path d="M333.90000000000003 245.3 V275.6 M333.90000000000003 243.8 H345.1 Q347.1 243.8 347.1 245.8 V247.8 M336.1 275.6 H345.1 Q347.1 275.6 347.1 273.6 V271.6" stroke="#2aa594" stroke-width="1" fill="none"/><path d="M335.1 245.0 V274.40000000000003 H345.90000000000003 V245.0z" stroke="#3a1f1f" stroke-width="0.8" fill="none"/><circle cx="340.7" cy="250.2" r="2.9" fill="#1a5f57"/><circle cx="340.7" cy="256.9" r="2.9" fill="#1a5f57"/><circle cx="340.7" cy="263.6" r="2.9" fill="#1a5f57"/><circle cx="340.7" cy="269.9" r="2.9" fill="#1a5f57"/><circle cx="333.6" cy="260" r="3.3" fill="#30b0a0"/><circle cx="347.1" cy="260" r="3.3" fill="#30b0a0"/>
<path d="M397.3 245.3 V275.6 M397.3 243.8 H408.5 Q410.5 243.8 410.5 245.8 V247.8 M399.5 275.6 H408.5 Q410.5 275.6 410.5 273.6 V271.6" stroke="#2aa594" stroke-width="1" fill="none"/><path d="M398.5 245.0 V274.40000000000003 H409.3 V245.0z" stroke="#3a1f1f" stroke-width="0.8" fill="none"/><circle cx="404.1" cy="250.2" r="2.9" fill="#1a5f57"/><circle cx="404.1" cy="256.9" r="2.9" fill="#1a5f57"/><circle cx="404.1" cy="263.6" r="2.9" fill="#1a5f57"/><circle cx="404.1" cy="269.9" r="2.9" fill="#1a5f57"/><circle cx="397" cy="260" r="3.3" fill="#30b0a0"/><circle cx="410.5" cy="260" r="3.3" fill="#30b0a0"/>
<path d="M367 244 H377 Q380.5 244 380.5 247.5 V272.5 Q380.5 276 377 276 H367" stroke="#8a9199" stroke-width="1.1" fill="none"/><path d="M365.3 249 V257 M365.3 262.8 V270.5" stroke="#8a9199" stroke-width="1"/>
<path d="M370 249 V271 M372.6 249 V271 M374.6 249 V271" stroke="#666d74" stroke-width="0.9"/>
<circle cx="365.3" cy="246.4" r="2.4" fill="#1b1b1b" stroke="#8a9199" stroke-width="1"/><circle cx="365.3" cy="246.4" r="0.9" fill="#8a9199"/>
<circle cx="365.3" cy="259.9" r="2.4" fill="#1b1b1b" stroke="#8a9199" stroke-width="1"/><circle cx="365.3" cy="259.9" r="0.9" fill="#8a9199"/>
<circle cx="365.3" cy="273.4" r="2.4" fill="#1b1b1b" stroke="#8a9199" stroke-width="1"/><circle cx="365.3" cy="273.4" r="0.9" fill="#8a9199"/>
<circle cx="378.8" cy="260" r="3.6" fill="#8b949c"/>
<circle cx="429" cy="250.6" r="4.3" fill="#3a90e0"/>
<circle cx="429" cy="259.9" r="4.3" fill="#3a90e0"/>
<circle cx="429" cy="268.7" r="4.3" fill="#3a90e0"/>
</svg>
<div class="a" style="left:248px;top:553px;width:174px;height:3px;background:#8a8a8a;border-radius:1px"></div>
<div class="hdr" style="left:675px;top:129px;width:205px;height:20px"></div>
<span class="t" style="left:678.0px;top:134.4px;font-size:10.5px;color:#c8c8c8;letter-spacing:-0.2px;">Properties</span>
<svg class="a" style="left:850px;top:131px" width="30" height="16"><path d="M3.5 3.5 h4 M4.3 3.5 v4.5 M6.7 3.5 v4.5 M2.5 8 h6 M5.5 8 v3.5" stroke="#eee" stroke-width="1.1" fill="none"/><rect x="16" y="3" width="10.5" height="10.5" fill="#d24a4a"/><path d="M19 6 l4.5 4.5 M23.5 6 l-4.5 4.5" stroke="#fff" stroke-width="1.3"/></svg>
<div class="a" style="left:675px;top:149px;width:205px;height:370px;background:#252525"></div>
<svg class="a" style="left:675px;top:149px" width="80" height="27"><rect x="5" y="6" width="6" height="6" rx="1" fill="#5fa0e0"/><rect x="5" y="14" width="6" height="6" rx="1" fill="#5fa0e0"/><path d="M8 7.5 l-1.5 2 h3z M8 15.5 l-1.5 2 h3z" fill="#111"/><path d="M13 8 h6 M13 11 h6 M13 14 h6 M13 17 h6 M13 20 h6" stroke="#667" stroke-width="1" stroke-dasharray="2 1"/><text x="27" y="13" font-size="8" fill="#5b8ed8" font-family="Liberation Sans" font-weight="bold">A</text><text x="27" y="21" font-size="8" fill="#c05050" font-family="Liberation Sans" font-weight="bold">Z</text><path d="M37 6 v13" stroke="#111" stroke-width="1.2"/><path d="M35 17 h4 l-2 3z" fill="#111"/><defs><linearGradient id="lg1" x1="0" y1="0" x2="0" y2="1"><stop offset="0" stop-color="#ffd83a"/><stop offset="1" stop-color="#f06a10"/></linearGradient></defs><path d="M57.5 6 L64 6 L60 11.5 L63.5 11.5 L54 22 L57.5 14.5 L53.5 14.5z" fill="url(#lg1)"/></svg>
<div class="a" style="left:675px;top:519px;width:204px;height:45px;background:#262626;border:1px solid #6a6a6a"></div>
<div class="hdr" style="left:882px;top:129px;width:544px;height:20px"></div>
<span class="t" style="left:886.0px;top:134.4px;font-size:10.5px;color:#c8c8c8;letter-spacing:-0.2px;">Train Graph</span>
<svg class="a" style="left:1396px;top:131px" width="30" height="16"><path d="M3.5 3.5 h4 M4.3 3.5 v4.5 M6.7 3.5 v4.5 M2.5 8 h6 M5.5 8 v3.5" stroke="#eee" stroke-width="1.1" fill="none"/><rect x="16.5" y="3" width="10.5" height="10.5" fill="#d24a4a"/><path d="M19.5 6 l4.5 4.5 M24 6 l-4.5 4.5" stroke="#fff" stroke-width="1.3"/></svg>
<div class="a" style="left:883px;top:150px;width:543px;height:414px;background:#fdfdf0;border-top:1px solid #e8e8d8"></div>
<svg class="a" style="left:883px;top:150px" width="543" height="414" viewBox="883 150 543 414"><g stroke="#b0b0a0" stroke-width="1.6" fill="none"><path d="M1040.75 170.5 V545.5"/><path d="M1162.5 170.5 V545.5"/><path d="M1284.25 170.5 V545.5"/><path d="M919.5 245.5 H1406"/><path d="M919.5 320.5 H1406"/><path d="M919.5 395.5 H1406"/><path d="M919.5 470.5 H1406"/><path d="M919.5 170.5 H1406 V552"/></g><path d="M919.5 170 V549 M916 545.5 H1406 M916 170.5 H919.5" stroke="#777" stroke-width="1.3" fill="none"/><path d="M919 170.5 L934 170.5 L934 203.5 L961.7 203.5 L963.8 232 L966 232 L969.5 242.5 L976.4 242.5 L979 253 L984 253 L990 252 L994 251.5 L996.5 275.5 L1003 275.5 L1005 289 L1008 289 L1011 303.5 L1017 303.5 L1020 317.6 L1027 317.6 L1030 328.7 L1036 328.7 L1038.5 335.6 L1045 335.6 L1048 349 L1052 349 L1054 359.6 L1060 359.6 L1061.5 370 L1067.5 370 L1070.5 373.1 L1077 373.1 L1079.5 385.6 L1086 385.6 L1088.5 395.1 L1092 395.1 L1095 401.6 L1101.5 401.6 L1104 407.2 L1110 407.2 L1113 411.3 L1120 411.3 L1127 414.2 L1130 414.2 L1134 421.5 L1135 421.5 L1137 426.7 L1142 426.7 L1145 429.5 L1150 429.5 L1154 433.5 L1160 433.5 L1163 437 L1169 437 L1172 442 L1178 443.5 L1184 443.5 L1188 445 L1193 445 L1196 446.5 L1203 446.5 L1206 447.1 L1210 447.1 L1213 452.4 L1220 452.4 L1223 453.7 L1234 453.7 L1237 457 L1247 456.9 L1249 455.6 L1253 455.6 L1256 459.8 L1265 459.8 L1267 458.9 L1276 458.9 L1279 460.6 L1295 460.6 L1298 458.9 L1304 458.9 L1307 462.8 L1318 462.8 L1321 464.4 L1330 464.4 L1333 463.4 L1337 463.4 L1340 466.7 L1347 466.7 L1350 465.4 L1355 465.4 L1357 464.5 L1361 464.5 L1363 466 L1373 466 L1375 465 L1380 465 L1383 463.4 L1387.7 463.4" stroke="#2b80cc" stroke-width="1.7" fill="none" stroke-linejoin="round"/><path d="M940 318 L953.4 326.8 L954 331.7 L961 331.7 L963.5 337.1 L967 337.1 L969.5 343 L976.5 343 L979 348.4 L985 348.4 L988 355.7 L993.5 355.7 L996 364 L1002.5 364 L1005 370.9 L1008 370.9 L1011 376.8 L1017.5 376.8 L1020 381.4 L1026 381.4 L1029 386 L1035.5 386 L1038.5 392.2 L1044.5 392.2 L1047.5 396.7 L1050.5 396.7 L1053.5 399 L1059.5 399 L1062 400.3 L1067.5 400.3 L1070.5 403.4 L1076.5 403.4 L1079.5 406.4 L1086 406.4 L1089 407.5 L1094.5 407.8 L1100.5 407.8 L1103.5 410.1 L1110 410.1 L1113 411 L1125 411 L1134 410 L1145 411 L1150 410 L1158 409 L1163 408.7 L1167 407.7 L1175 407.5 L1180 405.7 L1190 405 L1195 404.5 L1198 403.5 L1203 403.5 L1207 401.9 L1215 401.9 L1220 400.9 L1254 400.9 L1257 399.6 L1265 399.6 L1267 398.6 L1280 398.6 L1282 397.9 L1306 397.9 L1308 397 L1330 397 L1332 396.6 L1345 396.6 L1347 397.2 L1355 397.2 L1357 396.6 L1360 396.6 L1362 397.2 L1380 397.2 L1382 396.6 L1387.7 396.6" stroke="#b52222" stroke-width="1.7" fill="none" stroke-linejoin="round"/></svg>
<span class="t" style="left:1003.7px;width:300px;text-align:center;top:156.1px;font-size:9.7px;color:#1a1a1a;letter-spacing:0px;">RMS Train Error</span>
<span class="t" style="left:608.5px;width:300px;text-align:right;top:165.6px;font-size:9.7px;color:#1a2a44;letter-spacing:0px;">0.10</span>
<span class="t" style="left:606.5px;width:300px;text-align:right;top:540.9px;font-size:9.7px;color:#1a2a44;letter-spacing:0px;">0.0</span>
<span class="t" style="left:769.3px;width:300px;text-align:center;top:551.3px;font-size:9.7px;color:#1a2a44;letter-spacing:0px;">0</span>
<span class="t" style="left:1011.7px;width:300px;text-align:center;top:550.3px;font-size:9.7px;color:#1a1a1a;letter-spacing:0px;">Training Epochs</span>
<span class="t" style="left:1255.3px;width:300px;text-align:center;top:550.8px;font-size:9.7px;color:#1a2a44;letter-spacing:0px;">64.0</span>
<div class="a" style="left:1426px;top:129px;width:19px;height:616px;background:#2b2b2b"></div>
<div class="a" style="left:1427px;top:132px;width:18px;height:81px;background:#2e2e2e;border:1px solid #505050;border-right:none"></div>
<svg class="a" style="left:1427px;top:132px" width="18" height="20"><path d="M6 4 a2 2 0 1 1 0.1 0 M6 8 a2 2 0 1 1 0.1 0 M11 6 l3 -2 M11 8 l4 3" stroke="#888" stroke-width="1.1" fill="none"/><circle cx="14.5" cy="13" r="1.5" fill="none" stroke="#888"/><path d="M5 14 h6 M8 11 v6" stroke="#1f8fff" stroke-width="1.8"/></svg>
<span class="t" style="left:1429px;top:157px;font-size:10.5px;color:#9a9a9a;transform-origin:0 0;transform:translate(12.5px,0) rotate(90deg)">Toolbox</span>
<div class="hdr" style="left:20px;top:567px;width:1406px;height:22px"></div>
<span class="t" style="left:23.0px;top:572.9px;font-size:10.5px;color:#c8c8c8;letter-spacing:-0.2px;">Output</span>
<svg class="a" style="left:1396px;top:570px" width="30" height="16"><path d="M3.5 3.5 h4 M4.3 3.5 v4.5 M6.7 3.5 v4.5 M2.5 8 h6 M5.5 8 v3.5" stroke="#eee" stroke-width="1.1" fill="none"/><rect x="17" y="3" width="10.5" height="10.5" fill="#d24a4a"/><path d="M20 6 l4.5 4.5 M24.5 6 l-4.5 4.5" stroke="#fff" stroke-width="1.3"/></svg>
<div class="a" style="left:20px;top:589px;width:1406px;height:134px;background:#fff;border-top:2px solid #9a9a9a;border-left:2px solid #9a9a9a;border-right:1px solid #9a9a9a;border-bottom:1px solid #ddd"></div>
<span class="t" style="left:23.5px;top:594.3px;font-size:11px;color:#1a1a1a;letter-spacing:-0.27px;">Train Count 803k : Epochs 61.57 : Time 0:02:35 : RMS Error = 0.0219 (0.0212/55.3) : RMS Validation Error = 0.0400 (0.0362/25.5) : Delta Error = (+)-68.50 dB : Weight Max 22.54, RMS 1.20 :: Max Weights : Node37 = 0.68 : Layer5 = 22.54</span>
<span class="t" style="left:23.5px;top:608.5px;font-size:11px;color:#1a1a1a;letter-spacing:-0.27px;">Train Count 798k : Epochs 61.18 : Time 0:02:34 : RMS Error = 0.0219 (0.0212/55.3) : RMS Validation Error = 0.0400 (0.0362/25.5) : Delta Error = (+)-68.50 dB : Weight Max 22.50, RMS 1.20 :: Max Weights : Node37 = 0.69 : Layer5 = 22.50</span>
<span class="t" style="left:23.5px;top:622.8px;font-size:11px;color:#1a1a1a;letter-spacing:-0.27px;">Train Count 793k : Epochs 60.78 : Time 0:02:33 : RMS Error = 0.0219 (0.0212/55.3) : RMS Validation Error = 0.0400 (0.0362/25.5) : Delta Error = (+)-68.50 dB : Weight Max 22.42, RMS 1.19 :: Max Weights : Node37 = 0.68 : Layer5 = 22.42</span>
<span class="t" style="left:23.5px;top:637.0px;font-size:11px;color:#1a1a1a;letter-spacing:-0.27px;">Train Count 788k : Epochs 60.39 : Time 0:02:32 : RMS Error = 0.0216 (0.0212/55.3) : RMS Validation Error = 0.0399 (0.0362/25.5) : Delta Error = (+)-72.42 dB : Weight Max 22.33, RMS 1.19 :: Max Weights : Node37 = 0.68 : Layer5 = 22.33</span>
<span class="t" style="left:23.5px;top:651.3px;font-size:11px;color:#1a1a1a;letter-spacing:-0.27px;">Train Count 783k : Epochs 60.00 : Time 0:02:31 : RMS Error = 0.0216 (0.0212/55.3) : RMS Validation Error = 0.0399 (0.0362/25.5) : Delta Error = (+)-72.42 dB : Weight Max 22.28, RMS 1.19 :: Max Weights : Node37 = 0.68 : Layer5 = 22.28</span>
<span class="t" style="left:23.5px;top:665.5px;font-size:11px;color:#1a1a1a;letter-spacing:-0.27px;">Train Count 778k : Epochs 59.61 : Time 0:02:30 : RMS Error = 0.0216 (0.0212/55.3) : RMS Validation Error = 0.0399 (0.0362/25.5) : Delta Error = (+)-72.42 dB : Weight Max 22.18, RMS 1.19 :: Max Weights : Node37 = 0.68 : Layer5 = 22.18</span>
<span class="t" style="left:23.5px;top:679.7px;font-size:11px;color:#1a1a1a;letter-spacing:-0.27px;">Train Count 773k : Epochs 59.21 : Time 0:02:29 : RMS Error = 0.0213 (0.0212/55.3) : RMS Validation Error = 0.0399 (0.0362/25.5) : Delta Error = (-)-71.91 dB : Weight Max 22.14, RMS 1.18 :: Max Weights : Node37 = 0.68 : Layer5 = 22.14</span>
<span class="t" style="left:23.5px;top:694.0px;font-size:11px;color:#1a1a1a;letter-spacing:-0.27px;">Train Count 767k : Epochs 58.82 : Time 0:02:28 : RMS Error = 0.0213 (0.0212/55.3) : RMS Validation Error = 0.0399 (0.0362/25.5) : Delta Error = (-)-71.91 dB : Weight Max 22.09, RMS 1.18 :: Max Weights : Node37 = 0.68 : Layer5 = 22.09</span>
<div class="a" style="left:22px;top:707px;width:1388px;height:15px;background:#efefef"></div>
<div class="a" style="left:1410px;top:591px;width:15px;height:131px;background:#efefef"></div>
<div class="a" style="left:38px;top:713px;width:1196px;height:3px;background:#8a8a8a;border-radius:1px"></div>
<div class="a" style="left:1415px;top:607px;width:3px;height:16px;background:#8a8a8a;border-radius:1px"></div>
<div class="a" style="left:20px;top:723px;width:1406px;height:22px;background:#2e2e2e"></div>
<svg class="a" style="left:20px;top:723px" width="70" height="22"><g fill="#111"><rect x="5" y="8" width="1.5" height="7"/><path d="M6.5 11.5 l4 -3.5 v7z M20 11.5 l3.5 -3.5 v7z M36.5 8 v7 l3.5 -3.5z M51.5 8 v7 l3.5 -3.5z"/><rect x="55" y="8" width="1.5" height="7"/></g></svg>
<div class="a" style="left:86px;top:723px;width:38px;height:21px;background:#202020;border:1px solid #6a6a6a;border-top:none"></div>
<div class="a" style="left:123px;top:723px;width:41px;height:21px;background:#2b2b2b;border:1px solid #6a6a6a;border-top:none"></div>
<span class="t" style="left:91.5px;top:728.2px;font-size:11px;color:#f4f4f4;letter-spacing:0px;font-weight:bold;letter-spacing:-0.3px">Train</span>
<span class="t" style="left:127.5px;top:728.2px;font-size:11px;color:#dcdcdc;letter-spacing:-0.3px;">Status</span>
<svg class="a" style="left:1300px;top:745px" width="110" height="22"><path d="M4 11 h9" stroke="#8a8a8a" stroke-width="1.6"/><path d="M19 11 h68" stroke="#5f5f5f" stroke-width="2"/><rect x="41" y="6" width="3" height="10.5" fill="#8f8f8f"/><path d="M53.5 8 v5" stroke="#6a6a6a" stroke-width="1"/><path d="M94.5 11 h8.5 M98.7 6.5 v9" stroke="#8a8a8a" stroke-width="1.6"/></svg>
<span class="t" style="left:1272.5px;width:300px;text-align:center;top:750.9px;font-size:11px;color:#d8d8d8;letter-spacing:0px;">75%</span>
<!-- DIALOG -->
<div class="a" style="left:543px;top:176px;width:410px;height:342px;background:#2b2b2b;border-radius:8px;box-shadow:0 3px 40px 2px rgba(0,0,0,0.33)"></div>
<div class="a" style="left:543px;top:176px;width:410px;height:28px;background:#f2f1f6;border-radius:8px 8px 0 0"></div>
<svg class="a" style="left:550px;top:183px" width="16" height="13"><rect x="0.5" y="0.5" width="14" height="11" fill="#e8e8e8" stroke="#999" stroke-width="1"/><rect x="2" y="2.5" width="6" height="7.5" fill="#2d8a6e"/><rect x="8" y="2.5" width="3" height="7.5" fill="#4a6aa0"/><rect x="12" y="2.5" width="1.5" height="3" fill="#4a90d0"/></svg>
<span class="t" style="left:570.4px;top:184.7px;font-size:11px;color:#1a1a1a;letter-spacing:-0.1px;">Pre Processor - Node5 : DJIA</span>
<svg class="a" style="left:930px;top:182px" width="16" height="16"><path d="M3.3 3.3 L11.7 11.7 M11.7 3.3 L3.3 11.7" stroke="#222" stroke-width="1"/></svg>
<div class="a" style="left:550px;top:213px;width:396px;height:273px;background:#f0f0f0"></div>
<div class="a" style="left:550px;top:230px;width:396px;height:256px;background:#f0f0f0;border:1px solid #dcdcdc"></div>
<div class="a" style="left:550px;top:213px;width:76px;height:19px;background:linear-gradient(#fdfdfd,#f4f4f4);border:1px solid #dedede;border-bottom:none"></div>
<div class="a" style="left:626px;top:215px;width:52px;height:16px;background:#ececec;border:1px solid #dcdcdc;border-bottom:none;border-left:none"></div>
<div class="a" style="left:678px;top:215px;width:89px;height:16px;background:#ececec;border:1px solid #dcdcdc;border-bottom:none;border-left:none"></div>
<div class="a" style="left:767px;top:215px;width:58px;height:16px;background:#ececec;border:1px solid #dcdcdc;border-bottom:none;border-left:none"></div>
<div class="a" style="left:825px;top:215px;width:60px;height:16px;background:#ececec;border:1px solid #dcdcdc;border-bottom:none;border-left:none"></div>
<div class="a" style="left:885px;top:215px;width:34px;height:16px;background:#ececec;border:1px solid #dcdcdc;border-bottom:none;border-left:none"></div>
<span class="t" style="left:559.8px;top:217.2px;font-size:9.5px;color:#1a1a1a;letter-spacing:0px;">Normalization</span>
<span class="t" style="left:633.4px;top:218.6px;font-size:9.5px;color:#1a1a1a;letter-spacing:0px;">Field Key</span>
<span class="t" style="left:686.9px;top:218.6px;font-size:9.5px;color:#1a1a1a;letter-spacing:0px;">File Name Parser</span>
<span class="t" style="left:775.5px;top:218.6px;font-size:9.5px;color:#1a1a1a;letter-spacing:0px;">Derivative</span>
<span class="t" style="left:832.5px;top:218.6px;font-size:9.5px;color:#1a1a1a;letter-spacing:0px;">Date/Time</span>
<span class="t" style="left:893.0px;top:218.6px;font-size:9.5px;color:#1a1a1a;letter-spacing:0px;">FFT</span>
<div class="a" style="left:557px;top:239px;width:124px;height:243px;background:#efefef;border:1px solid #dadada"></div>
<svg class="a" style="left:560px;top:244px" width="20" height="36"><circle cx="11" cy="8.4" r="5.3" fill="#fafafa" stroke="#555" stroke-width="1"/><circle cx="11" cy="26.2" r="5.8" fill="#0f5cc0"/><circle cx="11" cy="26.2" r="2.4" fill="#fff"/></svg>
<span class="t" style="left:580.1px;top:247.8px;font-size:9.5px;color:#1a1a1a;letter-spacing:0px;">Linear</span>
<span class="t" style="left:580.1px;top:265.6px;font-size:9.5px;color:#1a1a1a;letter-spacing:0px;">Logarithmic</span>
<span class="t" style="left:567.5px;top:294.5px;font-size:9.7px;color:#1a1a1a;letter-spacing:0px;">Nomalization Factors</span>
<div class="a" style="left:566px;top:310px;width:103px;height:2px;background:#c8c8c8;border-bottom:1px solid #fff"></div>
<span class="t" style="left:569.4px;top:320.1px;font-size:9.7px;color:#1a1a1a;letter-spacing:0px;">Intercept:</span>
<span class="t" style="left:569.4px;top:338.4px;font-size:9.7px;color:#1a1a1a;letter-spacing:0px;">Slope:</span>
<div class="a" style="left:616px;top:318px;width:51px;height:15px;background:#f0f0f0;border:1px solid #e2e2e2"></div>
<div class="a" style="left:616px;top:336px;width:51px;height:16px;background:#f0f0f0;border:1px solid #e2e2e2"></div>
<span class="t" style="left:620.0px;top:320.9px;font-size:9.5px;color:#8a8a8a;letter-spacing:0px;">-1.557603</span>
<span class="t" style="left:620.0px;top:339.4px;font-size:9.5px;color:#8a8a8a;letter-spacing:0px;">0.243715</span>
<div class="a" style="left:564px;top:365px;width:105px;height:2px;background:#c8c8c8;border-bottom:1px solid #fff"></div>
<div class="a" style="left:572px;top:381px;width:39px;height:19px;background:#fdfdfd;border:1px solid #2b7ad6;border-radius:3px;box-shadow:inset 0 0 0 0.5px #7fb0ea"></div>
<div class="a" style="left:623px;top:381px;width:38px;height:19px;background:#fdfdfd;border:1px solid #d0d0d0;border-radius:3px"></div>
<span class="t" style="left:441.5px;width:300px;text-align:center;top:386.4px;font-size:9.5px;color:#1a1a1a;letter-spacing:0px;">Norm</span>
<span class="t" style="left:492.0px;width:300px;text-align:center;top:386.4px;font-size:9.5px;color:#1a1a1a;letter-spacing:0px;">Scale</span>
<div class="a" style="left:686px;top:236px;width:255px;height:123px;background:#fff;border:2px solid #9c9c9c;border-right-width:1px;border-bottom-width:2px"></div>
<svg class="a" style="left:686px;top:236px" width="255" height="123" viewBox="686 236 255 123"><rect x="723.60" y="251.5" width="7.4" height="88.5" fill="#2f80c4"/><rect x="732.56" y="308" width="7.4" height="32.0" fill="#2f80c4"/><rect x="741.52" y="333" width="7.4" height="7.0" fill="#2f80c4"/><rect x="750.48" y="334" width="7.4" height="6.0" fill="#2f80c4"/><rect x="759.44" y="327.5" width="7.4" height="12.5" fill="#2f80c4"/><rect x="768.40" y="321.3" width="7.4" height="18.7" fill="#2f80c4"/><rect x="777.36" y="308.6" width="7.4" height="31.4" fill="#2f80c4"/><rect x="786.32" y="324.4" width="7.4" height="15.6" fill="#2f80c4"/><rect x="795.28" y="337" width="7.4" height="3.0" fill="#2f80c4"/><rect x="804.24" y="334" width="7.4" height="6.0" fill="#2f80c4"/><rect x="813.20" y="330.3" width="7.4" height="9.7" fill="#2f80c4"/><rect x="822.16" y="338" width="7.4" height="2.0" fill="#2f80c4"/><rect x="831.12" y="337" width="7.4" height="3.0" fill="#2f80c4"/><rect x="840.08" y="338.5" width="7.4" height="1.5" fill="#2f80c4"/><rect x="849.04" y="336.2" width="7.4" height="3.8" fill="#2f80c4"/><rect x="858.00" y="334.2" width="7.4" height="5.8" fill="#2f80c4"/><rect x="866.96" y="337" width="7.4" height="3.0" fill="#2f80c4"/><rect x="875.92" y="338.5" width="7.4" height="1.5" fill="#2f80c4"/><rect x="884.88" y="338.5" width="7.4" height="1.5" fill="#2f80c4"/><rect x="893.84" y="338.5" width="7.4" height="1.5" fill="#2f80c4"/><rect x="902.80" y="336" width="7.4" height="4.0" fill="#2f80c4"/><rect x="911.76" y="337" width="7.4" height="3.0" fill="#2f80c4"/><path d="M722.5 254 V341 M718.5 254.5 H722.5 M718.5 340 H921" stroke="#777" stroke-width="1.3" fill="none"/><path d="M727.3 340 V345" stroke="#777" stroke-width="1.3"/><path d="M822 340 V345" stroke="#777" stroke-width="1.3"/><path d="M917 340 V345" stroke="#777" stroke-width="1.3"/></svg>
<span class="t" style="left:663.8px;width:300px;text-align:center;top:240.9px;font-size:9.5px;color:#1a1a1a;letter-spacing:0px;">Node22 : DJIA</span>
<span class="t" style="left:415.0px;width:300px;text-align:right;top:250.9px;font-size:9.5px;color:#222;letter-spacing:0px;">4.3k</span>
<span class="t" style="left:417.0px;width:300px;text-align:right;top:335.9px;font-size:9.5px;color:#222;letter-spacing:0px;">0.000</span>
<span class="t" style="left:577.3px;width:300px;text-align:center;top:346.7px;font-size:9.5px;color:#222;letter-spacing:0px;">596.5</span>
<span class="t" style="left:672.0px;width:300px;text-align:center;top:346.7px;font-size:9.5px;color:#222;letter-spacing:0px;">18351.3</span>
<span class="t" style="left:767.0px;width:300px;text-align:center;top:346.7px;font-size:9.5px;color:#222;letter-spacing:0px;">36106.2</span>
<div class="a" style="left:686px;top:361px;width:255px;height:123px;background:#fff;border:2px solid #9c9c9c;border-right-width:1px;border-bottom-width:2px"></div>
<svg class="a" style="left:686px;top:361px" width="255" height="123" viewBox="686 361 255 123"><rect x="723.60" y="459.9" width="7.4" height="4.8" fill="#2f80c4"/><rect x="732.56" y="408.8" width="7.4" height="55.9" fill="#2f80c4"/><rect x="741.52" y="394.5" width="7.4" height="70.2" fill="#2f80c4"/><rect x="750.48" y="443.2" width="7.4" height="21.5" fill="#2f80c4"/><rect x="759.44" y="453.9" width="7.4" height="10.8" fill="#2f80c4"/><rect x="768.40" y="458.2" width="7.4" height="6.5" fill="#2f80c4"/><rect x="777.36" y="445.8" width="7.4" height="18.9" fill="#2f80c4"/><rect x="786.32" y="445.1" width="7.4" height="19.6" fill="#2f80c4"/><rect x="795.28" y="444.1" width="7.4" height="20.6" fill="#2f80c4"/><rect x="804.24" y="435.1" width="7.4" height="29.6" fill="#2f80c4"/><rect x="813.20" y="455.5" width="7.4" height="9.2" fill="#2f80c4"/><rect x="822.16" y="456" width="7.4" height="8.7" fill="#2f80c4"/><rect x="831.12" y="456.9" width="7.4" height="7.8" fill="#2f80c4"/><rect x="840.08" y="447.1" width="7.4" height="17.6" fill="#2f80c4"/><rect x="849.04" y="428.2" width="7.4" height="36.5" fill="#2f80c4"/><rect x="858.00" y="376.1" width="7.4" height="88.6" fill="#2f80c4"/><rect x="866.96" y="424.6" width="7.4" height="40.1" fill="#2f80c4"/><rect x="875.92" y="442.6" width="7.4" height="22.1" fill="#2f80c4"/><rect x="884.88" y="443.1" width="7.4" height="21.6" fill="#2f80c4"/><rect x="893.84" y="447.8" width="7.4" height="16.9" fill="#2f80c4"/><rect x="902.80" y="439.5" width="7.4" height="25.2" fill="#2f80c4"/><rect x="911.76" y="441.1" width="7.4" height="23.6" fill="#2f80c4"/><path d="M722.5 378 V465.7 M718.5 378.5 H722.5 M718.5 464.7 H921" stroke="#777" stroke-width="1.3" fill="none"/><path d="M727.6 464.7 V469.7" stroke="#777" stroke-width="1.3"/><path d="M822.2 464.7 V469.7" stroke="#777" stroke-width="1.3"/><path d="M917.1 464.7 V469.7" stroke="#777" stroke-width="1.3"/></svg>
<span class="t" style="left:663.8px;width:300px;text-align:center;top:365.9px;font-size:9.5px;color:#1a1a1a;letter-spacing:0px;">Node22 : DJIA - Normalized</span>
<span class="t" style="left:415.0px;width:300px;text-align:right;top:374.9px;font-size:9.5px;color:#222;letter-spacing:0px;">1.9k</span>
<span class="t" style="left:417.0px;width:300px;text-align:right;top:460.6px;font-size:9.5px;color:#222;letter-spacing:0px;">0.000</span>
<span class="t" style="left:577.6px;width:300px;text-align:center;top:471.4px;font-size:9.5px;color:#222;letter-spacing:0px;">0.0</span>
<span class="t" style="left:672.2px;width:300px;text-align:center;top:471.4px;font-size:9.5px;color:#222;letter-spacing:0px;">0.5</span>
<span class="t" style="left:767.1px;width:300px;text-align:center;top:471.4px;font-size:9.5px;color:#222;letter-spacing:0px;">1.0</span>
<div class="a" style="left:907px;top:493px;width:39px;height:19px;background:#fdfdfd;border:1px solid #2b7ad6;border-radius:3px"></div>
<span class="t" style="left:776.5px;width:300px;text-align:center;top:498.2px;font-size:9.5px;color:#1a1a1a;letter-spacing:0px;">OK</span>
</body></html>
